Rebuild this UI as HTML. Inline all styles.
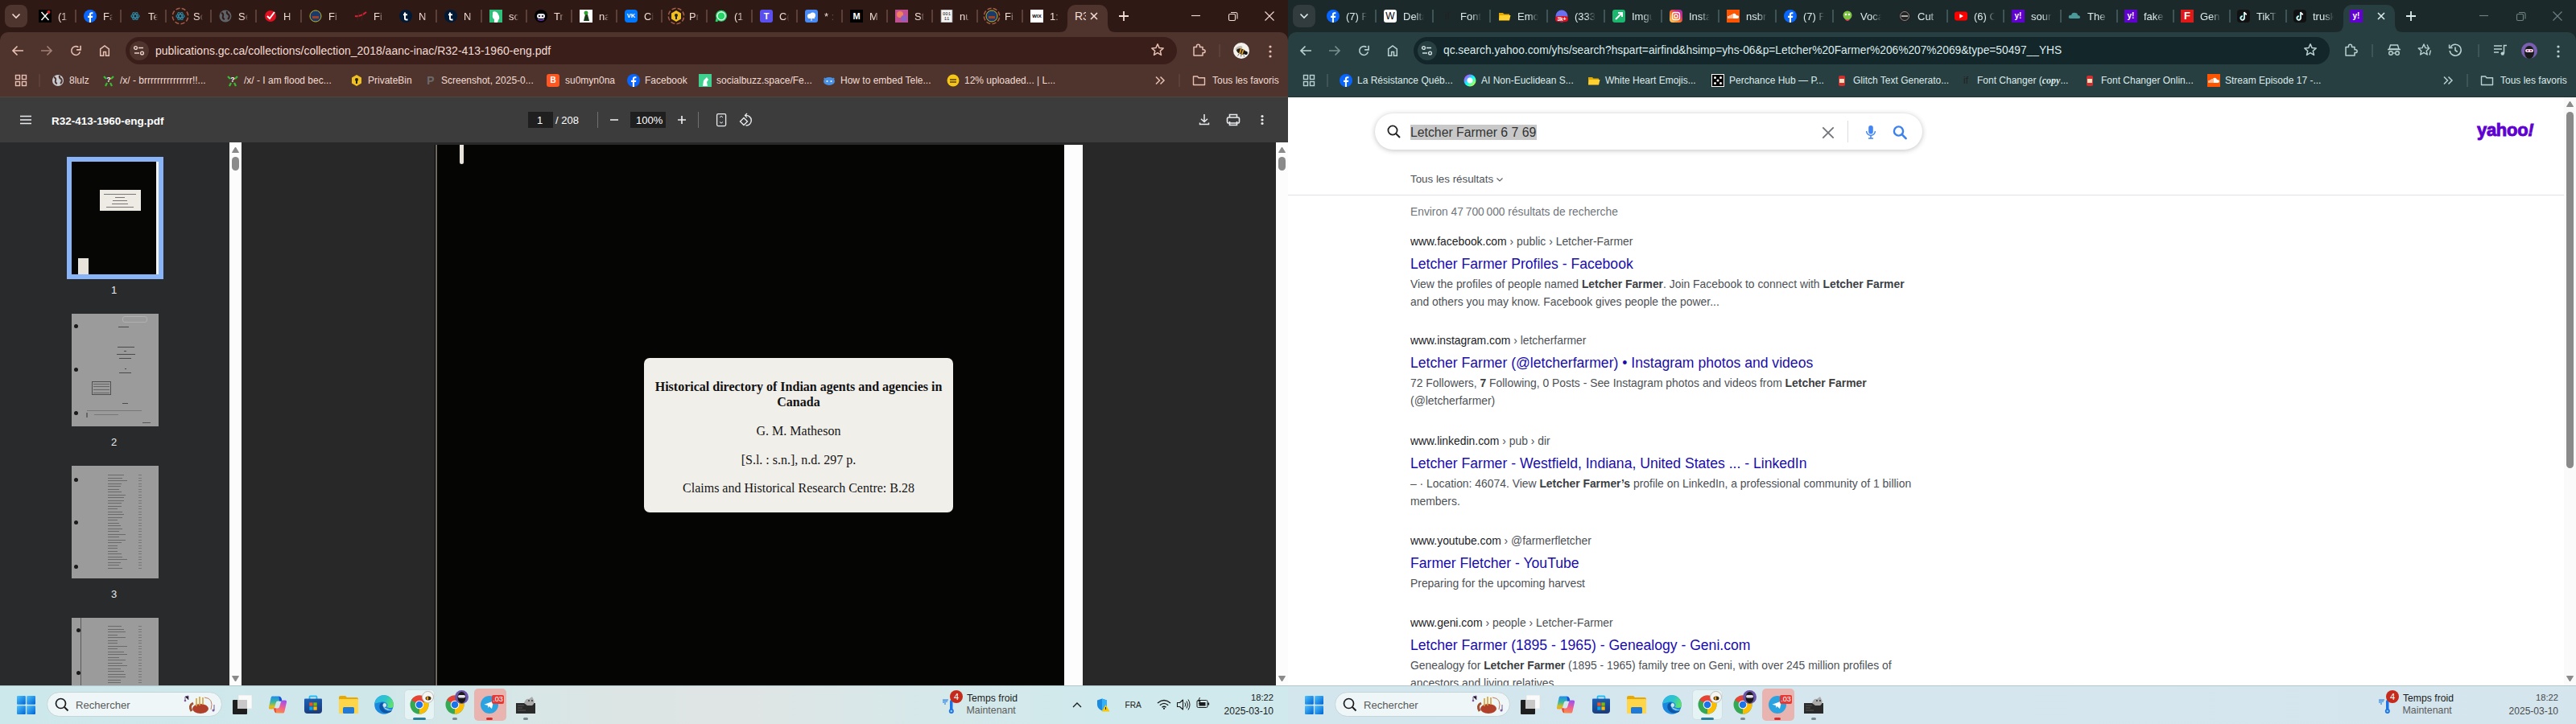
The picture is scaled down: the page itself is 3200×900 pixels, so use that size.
<!DOCTYPE html>
<html><head><meta charset="utf-8"><style>
html,body{margin:0;padding:0;width:3200px;height:900px;overflow:hidden;background:#000;font-family:"Liberation Sans",sans-serif}
body>div,body>svg{position:absolute}
div{box-sizing:border-box}
.t{position:absolute;white-space:nowrap}
.tt{overflow:hidden;-webkit-mask-image:linear-gradient(to right,#000 55%,transparent)}
.ic{position:absolute;text-align:center;line-height:16px;font-family:"Liberation Sans",sans-serif}
</style></head><body>
<div style="left:0px;top:0px;width:1600px;height:52px;background:#2f1915;"></div>
<div style="left:6px;top:6px;width:28px;height:28px;background:#4e352e;border-radius:8px"></div>
<svg style="position:absolute;left:14px;top:16px;" width="12" height="8" viewBox="0 0 12 8"><path d="M1.5 1.5 L6 6 L10.5 1.5" stroke="#f3dcd4" stroke-width="1.6" fill="none"/></svg>
<svg style="position:absolute;left:48px;top:12px" width="16" height="16" viewBox="0 0 16 16"><rect width="16" height="16" fill="#000"/><path d="M3.5 3 L12.5 13 M12.5 3 L3.5 13" stroke="#fff" stroke-width="1.5"/><circle cx="12.5" cy="3" r="2" fill="#e02020"/></svg>
<div class="t tt" style="left:72px;top:12.5px;width:11.5px;font-size:13px;line-height:16px;color:#f3dcd4">(1</div>
<div style="left:93px;top:12px;width:1.6px;height:16px;background:#5c3f37;"></div>
<svg style="position:absolute;left:104px;top:12px" width="16" height="16" viewBox="0 0 16 16"><circle cx="8" cy="8" r="8" fill="#0866ff"/><path d="M9 16 V10 H11 L11.3 7.7 H9 V6.4 C9 5.8 9.3 5.3 10.1 5.3 H11.4 V3.3 C10.9 3.2 10.3 3.2 9.7 3.2 C8 3.2 6.9 4.2 6.9 6 V7.7 H5 V10 H6.9 V16 Z" fill="#fff"/></svg>
<div class="t tt" style="left:128px;top:12.5px;width:11.5px;font-size:13px;line-height:16px;color:#f3dcd4">Fa</div>
<div style="left:149px;top:12px;width:1.6px;height:16px;background:#5c3f37;"></div>
<svg style="position:absolute;left:160px;top:12px" width="16" height="16" viewBox="0 0 16 16"><g stroke="#2a8aa8" stroke-width="1.2" fill="none"><ellipse cx="8" cy="8" rx="5" ry="2"/><ellipse cx="8" cy="8" rx="5" ry="2" transform="rotate(60 8 8)"/><ellipse cx="8" cy="8" rx="5" ry="2" transform="rotate(120 8 8)"/></g></svg>
<div class="t tt" style="left:184px;top:12.5px;width:11.5px;font-size:13px;line-height:16px;color:#f3dcd4">Te</div>
<div style="left:205px;top:12px;width:1.6px;height:16px;background:#5c3f37;"></div>
<svg style="position:absolute;left:216px;top:12px" width="16" height="16" viewBox="0 0 16 16"><g stroke="#2a8aa8" stroke-width="1.2" fill="none"><ellipse cx="8" cy="8" rx="5" ry="2"/><ellipse cx="8" cy="8" rx="5" ry="2" transform="rotate(60 8 8)"/><ellipse cx="8" cy="8" rx="5" ry="2" transform="rotate(120 8 8)"/></g></svg><svg style="position:absolute;left:212px;top:8px" width="24" height="24"><circle cx="12" cy="12" r="9.7" stroke="#a55e48" stroke-width="1.5" fill="none" stroke-dasharray="5.2 2.4" transform="rotate(-80 12 12)"/></svg>
<div class="t tt" style="left:240px;top:12.5px;width:11.5px;font-size:13px;line-height:16px;color:#f3dcd4">Sc</div>
<div style="left:261px;top:12px;width:1.6px;height:16px;background:#5c3f37;"></div>
<svg style="position:absolute;left:272px;top:12px" width="16" height="16" viewBox="0 0 16 16"><circle cx="8" cy="8" r="7.5" fill="#5f6368"/><path d="M3 4 Q6 5 5 8 Q4 11 7 12 M10 2 Q9 5 12 6 Q14 9 11 12" stroke="#2f1915" stroke-width="2" fill="none"/></svg>
<div class="t tt" style="left:296px;top:12.5px;width:11.5px;font-size:13px;line-height:16px;color:#f3dcd4">Se</div>
<div style="left:317px;top:12px;width:1.6px;height:16px;background:#5c3f37;"></div>
<svg style="position:absolute;left:328px;top:12px" width="16" height="16" viewBox="0 0 16 16"><circle cx="8" cy="8" r="7" fill="#e01020"/><path d="M4 8 L7 11 L13 3" stroke="#fff" stroke-width="2" fill="none"/></svg>
<div class="t tt" style="left:352px;top:12.5px;width:11.5px;font-size:13px;line-height:16px;color:#f3dcd4">H</div>
<div style="left:373px;top:12px;width:1.6px;height:16px;background:#5c3f37;"></div>
<svg style="position:absolute;left:384px;top:12px" width="16" height="16" viewBox="0 0 16 16"><circle cx="8" cy="8" r="7.5" fill="#1a3a6a"/><circle cx="8" cy="8" r="7" stroke="#c0b020" stroke-width="1" fill="none"/><rect x="4" y="8" width="8" height="3" fill="#a04020"/></svg>
<div class="t tt" style="left:408px;top:12.5px;width:11.5px;font-size:13px;line-height:16px;color:#f3dcd4">Fi</div>
<svg style="position:absolute;left:440px;top:12px" width="16" height="16" viewBox="0 0 16 16"><path d="M1 8 Q8 9 15 3" stroke="#e02030" stroke-width="2" fill="none"/><path d="M6 3 L4 14 M11 3 L9 14" stroke="#402020" stroke-width="1" fill="none"/></svg>
<div class="t tt" style="left:464px;top:12.5px;width:11.5px;font-size:13px;line-height:16px;color:#f3dcd4">Fi</div>
<svg style="position:absolute;left:496px;top:12px" width="16" height="16" viewBox="0 0 16 16"><circle cx="8" cy="8" r="8" fill="#001935"/><path d="M7 3.5 V11 Q7 12.5 9 12.5 H10.5 M5 6.3 H10" stroke="#fff" stroke-width="2" fill="none"/></svg>
<div class="t tt" style="left:520px;top:12.5px;width:11.5px;font-size:13px;line-height:16px;color:#f3dcd4">N</div>
<div style="left:541px;top:12px;width:1.6px;height:16px;background:#5c3f37;"></div>
<svg style="position:absolute;left:552px;top:12px" width="16" height="16" viewBox="0 0 16 16"><circle cx="8" cy="8" r="8" fill="#001935"/><path d="M7 3.5 V11 Q7 12.5 9 12.5 H10.5 M5 6.3 H10" stroke="#fff" stroke-width="2" fill="none"/></svg>
<div class="t tt" style="left:576px;top:12.5px;width:11.5px;font-size:13px;line-height:16px;color:#f3dcd4">N</div>
<div style="left:597px;top:12px;width:1.6px;height:16px;background:#5c3f37;"></div>
<svg style="position:absolute;left:608px;top:12px" width="16" height="16" viewBox="0 0 16 16"><rect width="16" height="16" fill="#2fbf7a"/><path d="M4 3 Q7 1 10 4 L12 8 Q13 11 11 13 L10 16 H6 L6 12 Q3 10 4 6 Z" fill="#fff"/></svg>
<div class="t tt" style="left:632px;top:12.5px;width:11.5px;font-size:13px;line-height:16px;color:#f3dcd4">sc</div>
<div style="left:653px;top:12px;width:1.6px;height:16px;background:#5c3f37;"></div>
<svg style="position:absolute;left:664px;top:12px" width="16" height="16" viewBox="0 0 16 16"><circle cx="8" cy="8" r="8" fill="#000"/><rect x="3" y="5" width="10" height="6" rx="3" fill="#e8e8f0"/><circle cx="6" cy="8" r="1" fill="#000"/><circle cx="10" cy="8" r="1" fill="#000"/><path d="M4 12 Q8 14 12 12" stroke="#8040c0" stroke-width="1.5" fill="none"/></svg>
<div class="t tt" style="left:688px;top:12.5px;width:11.5px;font-size:13px;line-height:16px;color:#f3dcd4">Tr</div>
<div style="left:709px;top:12px;width:1.6px;height:16px;background:#5c3f37;"></div>
<svg style="position:absolute;left:720px;top:12px" width="16" height="16" viewBox="0 0 16 16"><rect width="16" height="16" fill="#fff"/><path d="M5 14 L7 6 L10 6 L12 14 Z" fill="#1a3a1a"/><circle cx="8" cy="4" r="2.5" fill="#30a030"/></svg>
<div class="t tt" style="left:744px;top:12.5px;width:11.5px;font-size:13px;line-height:16px;color:#f3dcd4">na</div>
<div style="left:765px;top:12px;width:1.6px;height:16px;background:#5c3f37;"></div>
<div class="ic" style="left:776px;top:12px;width:16px;height:16px;background:#0077ff;border-radius:4px;color:#fff;font-size:7.5px;font-weight:700">VK</div>
<div class="t tt" style="left:800px;top:12.5px;width:11.5px;font-size:13px;line-height:16px;color:#f3dcd4">Ci</div>
<div style="left:821px;top:12px;width:1.6px;height:16px;background:#5c3f37;"></div>
<svg style="position:absolute;left:832px;top:12px" width="16" height="16" viewBox="0 0 16 16"><path d="M8 1 L14 4.5 V11.5 L8 15 L2 11.5 V4.5 Z" fill="#f0c020"/><circle cx="8" cy="7" r="2" fill="#222"/><rect x="7" y="8" width="2" height="4" fill="#222"/></svg><svg style="position:absolute;left:828px;top:8px" width="24" height="24"><circle cx="12" cy="12" r="9.7" stroke="#a55e48" stroke-width="1.5" fill="none" stroke-dasharray="5.2 2.4" transform="rotate(-80 12 12)"/></svg>
<div class="t tt" style="left:856px;top:12.5px;width:11.5px;font-size:13px;line-height:16px;color:#f3dcd4">Pr</div>
<div style="left:877px;top:12px;width:1.6px;height:16px;background:#5c3f37;"></div>
<svg style="position:absolute;left:888px;top:12px" width="16" height="16" viewBox="0 0 16 16"><circle cx="8" cy="7.8" r="7" fill="#25d366"/><path d="M2 15 L3 11" stroke="#25d366" stroke-width="3"/><circle cx="8" cy="7.8" r="5" stroke="#fff" stroke-width="1.2" fill="none"/></svg>
<div class="t tt" style="left:912px;top:12.5px;width:11.5px;font-size:13px;line-height:16px;color:#f3dcd4">(1</div>
<div style="left:933px;top:12px;width:1.6px;height:16px;background:#5c3f37;"></div>
<div class="ic" style="left:944px;top:12px;width:16px;height:16px;background:#5b4ff0;border-radius:3px;color:#fff;font-size:11px;font-weight:900">T</div>
<div class="t tt" style="left:968px;top:12.5px;width:11.5px;font-size:13px;line-height:16px;color:#f3dcd4">C(</div>
<div style="left:989px;top:12px;width:1.6px;height:16px;background:#5c3f37;"></div>
<svg style="position:absolute;left:1000px;top:12px" width="16" height="16" viewBox="0 0 16 16"><rect width="16" height="16" rx="3" fill="#4a8af4"/><circle cx="6" cy="8" r="3" fill="#fff"/><circle cx="9.5" cy="7" r="3.5" fill="#fff"/><rect x="4" y="8" width="8" height="3" fill="#fff"/><rect x="7.5" y="10" width="1" height="4" fill="#fff"/></svg>
<div class="t tt" style="left:1024px;top:12.5px;width:11.5px;font-size:13px;line-height:16px;color:#f3dcd4">* :</div>
<div style="left:1045px;top:12px;width:1.6px;height:16px;background:#5c3f37;"></div>
<div class="ic" style="left:1056px;top:12px;width:16px;height:16px;background:#000;border-radius:0px;color:#fff;font-size:11px;font-weight:900">M</div>
<div class="t tt" style="left:1080px;top:12.5px;width:11.5px;font-size:13px;line-height:16px;color:#f3dcd4">M</div>
<div style="left:1101px;top:12px;width:1.6px;height:16px;background:#5c3f37;"></div>
<svg style="position:absolute;left:1112px;top:12px" width="16" height="16" viewBox="0 0 16 16"><rect width="16" height="16" fill="#c05090"/><circle cx="6" cy="6" r="4" fill="#f08060"/><circle cx="11" cy="11" r="4" fill="#9060c0"/></svg>
<div class="t tt" style="left:1136px;top:12.5px;width:11.5px;font-size:13px;line-height:16px;color:#f3dcd4">St</div>
<div style="left:1157px;top:12px;width:1.6px;height:16px;background:#5c3f37;"></div>
<svg style="position:absolute;left:1168px;top:12px" width="16" height="16" viewBox="0 0 16 16"><rect x="1" y="0" width="14" height="16" fill="#f4f4f4" stroke="#888" stroke-width="0.8"/><text x="8" y="7" font-size="5.5" text-anchor="middle" fill="#222" font-family="Liberation Mono">001</text><text x="8" y="13" font-size="5.5" text-anchor="middle" fill="#222" font-family="Liberation Mono">11</text></svg>
<div class="t tt" style="left:1192px;top:12.5px;width:11.5px;font-size:13px;line-height:16px;color:#f3dcd4">nu</div>
<div style="left:1213px;top:12px;width:1.6px;height:16px;background:#5c3f37;"></div>
<svg style="position:absolute;left:1224px;top:12px" width="16" height="16" viewBox="0 0 16 16"><circle cx="8" cy="8" r="7.5" fill="#1a3a6a"/><circle cx="8" cy="8" r="7" stroke="#c0b020" stroke-width="1" fill="none"/><rect x="4" y="8" width="8" height="3" fill="#a04020"/></svg><svg style="position:absolute;left:1220px;top:8px" width="24" height="24"><circle cx="12" cy="12" r="9.7" stroke="#a55e48" stroke-width="1.5" fill="none" stroke-dasharray="5.2 2.4" transform="rotate(-80 12 12)"/></svg>
<div class="t tt" style="left:1248px;top:12.5px;width:11.5px;font-size:13px;line-height:16px;color:#f3dcd4">Fi</div>
<div style="left:1269px;top:12px;width:1.6px;height:16px;background:#5c3f37;"></div>
<div class="ic" style="left:1280px;top:12px;width:16px;height:16px;background:#fff;border-radius:0px;color:#000;font-size:6px;font-weight:700">WIX</div>
<div class="t tt" style="left:1304px;top:12.5px;width:11.5px;font-size:13px;line-height:16px;color:#f3dcd4">1:</div>
<div style="left:1326px;top:6px;width:50px;height:40px;background:#4e342d;border-radius:10px 10px 0 0"></div>
<svg style="position:absolute;left:1316px;top:26px;" width="10" height="14" viewBox="0 0 10 14"><path d="M0 14 Q10 14 10 4 L10 14 Z" fill="#4e342d"/></svg>
<svg style="position:absolute;left:1376px;top:26px;" width="10" height="14" viewBox="0 0 10 14"><path d="M10 14 Q0 14 0 4 L0 14 Z" fill="#4e342d"/></svg>
<div class="t" style="left:1335px;top:12px;width:14px;overflow:hidden;font-size:14px;line-height:16px;color:#f3dcd4">R32</div>
<svg style="position:absolute;left:1353px;top:14px;" width="12" height="12" viewBox="0 0 12 12"><path d="M2 2 L10 10 M10 2 L2 10" stroke="#f3dcd4" stroke-width="1.6"/></svg>
<svg style="position:absolute;left:1389px;top:13px;" width="14" height="14" viewBox="0 0 14 14"><path d="M7 1 V13 M1 7 H13" stroke="#f3dcd4" stroke-width="1.8"/></svg>
<svg style="position:absolute;left:1479px;top:13px;" width="14" height="14" viewBox="0 0 14 14"><path d="M1 6.5 H12" stroke="#f3dcd4" stroke-width="1.1"/></svg>
<svg style="position:absolute;left:1525px;top:14px;" width="14" height="14" viewBox="0 0 14 14"><rect x="1.5" y="3.5" width="8" height="8" rx="1.5" stroke="#f3dcd4" stroke-width="1.1" fill="none"/><path d="M4 1.5 H10 Q12 1.5 12 3.5 V9.5" stroke="#f3dcd4" stroke-width="1.1" fill="none"/></svg>
<svg style="position:absolute;left:1570px;top:13px;" width="14" height="14" viewBox="0 0 14 14"><path d="M1.5 1.5 L12.5 12.5 M12.5 1.5 L1.5 12.5" stroke="#f3dcd4" stroke-width="1.1"/></svg>
<div style="left:0px;top:40px;width:1600px;height:80px;background:#4e342d;border-radius:10px 10px 0 0"></div>
<svg style="position:absolute;left:13px;top:55px;" width="18" height="16" viewBox="0 0 18 16"><path d="M16 8 H3 M8.5 2.5 L3 8 L8.5 13.5" stroke="#e8bfb3" stroke-width="1.7" fill="none"/></svg>
<svg style="position:absolute;left:49px;top:55px;" width="18" height="16" viewBox="0 0 18 16"><path d="M2 8 H15 M9.5 2.5 L15 8 L9.5 13.5" stroke="#e8bfb3" stroke-width="1.7" fill="none" opacity="0.55"/></svg>
<svg style="position:absolute;left:86px;top:55px;" width="16" height="16" viewBox="0 0 16 16"><path d="M13.4 9.4 A5.4 5.4 0 1 1 11.4 3.7" stroke="#e8bfb3" stroke-width="1.6" fill="none"/><path d="M14.1 1.8 V6.9 H9.1" stroke="#e8bfb3" stroke-width="1.6" fill="none"/></svg>
<svg style="position:absolute;left:122px;top:55px;" width="16" height="16" viewBox="0 0 16 16"><path d="M2.7 14.2 V5.9 L8 1.9 L13.3 5.9 V14.2 H9.5 V9.4 H6.6 V14.2 Z" stroke="#e8bfb3" stroke-width="1.5" fill="none" stroke-linejoin="miter"/></svg>
<div style="left:156px;top:46px;width:1306px;height:34px;background:#391e19;border-radius:17px"></div>
<div style="left:161px;top:51px;width:24px;height:24px;background:#4e342d;border-radius:12px"></div>
<svg style="position:absolute;left:165px;top:56px;" width="16" height="14" viewBox="0 0 16 14"><circle cx="3.5" cy="3.5" r="1.9" stroke="#f3dcd4" stroke-width="1.3" fill="none"/><path d="M7 3.5 H13" stroke="#f3dcd4" stroke-width="1.4"/><circle cx="11.5" cy="10" r="1.9" stroke="#f3dcd4" stroke-width="1.3" fill="none"/><path d="M2 10 H8" stroke="#f3dcd4" stroke-width="1.4"/></svg>
<div class="t" style="left:193px;top:55px;font-size:14px;line-height:16px;color:#f3dcd4">publications.gc.ca/collections/collection_2018/aanc-inac/R32-413-1960-eng.pdf</div>
<svg style="position:absolute;left:1429px;top:53px;" width="18" height="18" viewBox="0 0 18 18"><path d="M9 1.8 L11.1 6.6 L16.2 7 L12.3 10.4 L13.5 15.4 L9 12.7 L4.5 15.4 L5.7 10.4 L1.8 7 L6.9 6.6 Z" stroke="#e8bfb3" stroke-width="1.5" fill="none" stroke-linejoin="round"/></svg>
<svg style="position:absolute;left:1480px;top:53px;" width="18" height="18" viewBox="0 0 18 18"><path d="M3 5.5 H6.5 V4.3 A2 2 0 0 1 10.5 4.3 V5.5 H14 V8.8 H15.2 A1.9 1.9 0 0 1 15.2 12.6 H14 V16 H3 Z" stroke="#e8bfb3" stroke-width="1.5" fill="none" stroke-linejoin="round"/></svg>
<div style="left:1514px;top:55px;width:2px;height:16px;background:#5c3f37;"></div>
<div style="left:1532px;top:53px;width:20px;height:20px;border-radius:10px;background:#f4f1ec"></div>
<svg style="position:absolute;left:1532px;top:53px;" width="20" height="20" viewBox="0 0 20 20"><ellipse cx="7" cy="7" rx="4.5" ry="2.4" transform="rotate(-25 7 7)" fill="#b8b2a8" opacity="0.85"/><g transform="rotate(18 10 11)"><ellipse cx="10" cy="11" rx="6" ry="3.3" fill="#231c12"/><rect x="8" y="7.8" width="1.6" height="6.4" fill="#e2a628"/><rect x="11" y="7.8" width="1.6" height="6.4" fill="#e2a628"/><circle cx="16" cy="11" r="2.2" fill="#141414"/></g><path d="M7 14 L5.5 16.5 M10 15 L9.5 17.5 M13 15.5 L13.5 17.5" stroke="#333" stroke-width="0.7"/></svg>
<svg style="position:absolute;left:1575px;top:55px;" width="6" height="18" viewBox="0 0 6 18"><circle cx="3" cy="3" r="1.6" fill="#e8bfb3"/><circle cx="3" cy="9" r="1.6" fill="#e8bfb3"/><circle cx="3" cy="15" r="1.6" fill="#e8bfb3"/></svg>
<svg style="position:absolute;left:18px;top:92px;" width="16" height="16" viewBox="0 0 16 16"><rect x="1.5" y="1.5" width="5" height="5" stroke="#e8bfb3" stroke-width="1.4" fill="none"/><rect x="9.5" y="1.5" width="5" height="5" stroke="#e8bfb3" stroke-width="1.4" fill="none"/><rect x="1.5" y="9.5" width="5" height="5" stroke="#e8bfb3" stroke-width="1.4" fill="none"/><rect x="9.5" y="9.5" width="5" height="5" stroke="#e8bfb3" stroke-width="1.4" fill="none"/></svg>
<div style="left:48px;top:92px;width:2px;height:16px;background:#5c3f37;"></div>
<svg style="position:absolute;left:64px;top:92px" width="16" height="16" viewBox="0 0 16 16"><circle cx="8" cy="8" r="7" fill="#c8ccd0"/><path d="M3 4 Q6 5 5 8 Q4 11 7 12 M10 2 Q9 5 12 6 Q14 9 11 12" stroke="#4e342d" stroke-width="2" fill="none"/></svg>
<div class="t" style="left:86px;top:93px;font-size:12px;line-height:15px;color:#f3dcd4;white-space:nowrap">8lulz</div>
<svg style="position:absolute;left:127px;top:92px" width="16" height="16" viewBox="0 0 16 16"><path d="M2 3 L5 6 M14 3 L11 6" stroke="#30c030" stroke-width="2.2"/><text x="8" y="10" font-size="9" text-anchor="middle" fill="#fff" font-weight="700" font-family="Liberation Sans">?</text><path d="M4 15 L6 11 M12 15 L10 11" stroke="#30c030" stroke-width="2.2"/></svg>
<div class="t" style="left:149px;top:93px;font-size:12px;line-height:15px;color:#f3dcd4;white-space:nowrap">/x/ - brrrrrrrrrrrrrrr!!...</div>
<svg style="position:absolute;left:281px;top:92px" width="16" height="16" viewBox="0 0 16 16"><path d="M2 3 L5 6 M14 3 L11 6" stroke="#30c030" stroke-width="2.2"/><text x="8" y="10" font-size="9" text-anchor="middle" fill="#fff" font-weight="700" font-family="Liberation Sans">?</text><path d="M4 15 L6 11 M12 15 L10 11" stroke="#30c030" stroke-width="2.2"/></svg>
<div class="t" style="left:303px;top:93px;font-size:12px;line-height:15px;color:#f3dcd4;white-space:nowrap">/x/ - I am flood bec...</div>
<svg style="position:absolute;left:435px;top:92px" width="16" height="16" viewBox="0 0 16 16"><path d="M8 1 L14 4.5 V11.5 L8 15 L2 11.5 V4.5 Z" fill="#f0c020"/><circle cx="8" cy="7" r="2" fill="#222"/><rect x="7" y="8" width="2" height="4" fill="#222"/></svg>
<div class="t" style="left:457px;top:93px;font-size:12px;line-height:15px;color:#f3dcd4;white-space:nowrap">PrivateBin</div>
<div class="ic" style="left:527px;top:92px;width:16px;height:16px;background:transparent;border-radius:0px;color:#6a6a6a;font-size:14px;font-weight:900">P</div>
<div class="t" style="left:548px;top:93px;font-size:12px;line-height:15px;color:#f3dcd4;white-space:nowrap">Screenshot, 2025-0...</div>
<div class="ic" style="left:679px;top:92px;width:16px;height:16px;background:#ff5722;border-radius:3px;color:#fff;font-size:10px;font-weight:900">B</div>
<div class="t" style="left:702px;top:93px;font-size:12px;line-height:15px;color:#f3dcd4;white-space:nowrap">su0myn0na</div>
<svg style="position:absolute;left:779px;top:92px" width="16" height="16" viewBox="0 0 16 16"><circle cx="8" cy="8" r="8" fill="#0866ff"/><path d="M9 16 V10 H11 L11.3 7.7 H9 V6.4 C9 5.8 9.3 5.3 10.1 5.3 H11.4 V3.3 C10.9 3.2 10.3 3.2 9.7 3.2 C8 3.2 6.9 4.2 6.9 6 V7.7 H5 V10 H6.9 V16 Z" fill="#fff"/></svg>
<div class="t" style="left:801px;top:93px;font-size:12px;line-height:15px;color:#f3dcd4;white-space:nowrap">Facebook</div>
<svg style="position:absolute;left:868px;top:92px" width="16" height="16" viewBox="0 0 16 16"><rect width="16" height="16" fill="#3fcf8e"/><path d="M5 15 L6 8 L10 4 L12 7 L10 10 L11 15 Z" fill="#fff"/></svg>
<div class="t" style="left:890px;top:93px;font-size:12px;line-height:15px;color:#f3dcd4;white-space:nowrap">socialbuzz.space/Fe...</div>
<svg style="position:absolute;left:1022px;top:92px" width="16" height="16" viewBox="0 0 16 16"><ellipse cx="8" cy="9" rx="7" ry="5" fill="#4a90e2"/><path d="M2 5 L4 8 M14 5 L12 8" stroke="#4a90e2" stroke-width="2"/><circle cx="5.5" cy="9" r="1" fill="#fff"/><circle cx="10.5" cy="9" r="1" fill="#fff"/></svg>
<div class="t" style="left:1044px;top:93px;font-size:12px;line-height:15px;color:#f3dcd4;white-space:nowrap">How to embed Tele...</div>
<svg style="position:absolute;left:1176px;top:92px" width="16" height="16" viewBox="0 0 16 16"><circle cx="8" cy="8" r="7.5" fill="#f5c518"/><path d="M4 7 H12 M4 10 H12" stroke="#5a4000" stroke-width="1.3"/></svg>
<div class="t" style="left:1198px;top:93px;font-size:12px;line-height:15px;color:#f3dcd4;white-space:nowrap">12% uploaded... | L...</div>
<svg style="position:absolute;left:1434px;top:94px;" width="14" height="12" viewBox="0 0 14 12"><path d="M2 1.5 L6.5 6 L2 10.5 M7.5 1.5 L12 6 L7.5 10.5" stroke="#e8bfb3" stroke-width="1.5" fill="none"/></svg>
<div style="left:1464px;top:92px;width:2px;height:16px;background:#5c3f37;"></div>
<svg style="position:absolute;left:1481px;top:92px;" width="18" height="16" viewBox="0 0 18 16"><path d="M1.5 3 H6.5 L8 4.8 H15.5 V13.5 H1.5 Z" stroke="#e8bfb3" stroke-width="1.4" fill="none" stroke-linejoin="round"/></svg>
<div class="t" style="left:1506px;top:93px;font-size:12px;line-height:15px;color:#f3dcd4;white-space:nowrap">Tous les favoris</div>
<div style="left:1600px;top:0px;width:1600px;height:52px;background:#1c292b;"></div>
<div style="left:1606px;top:6px;width:28px;height:28px;background:#323c3e;border-radius:8px"></div>
<svg style="position:absolute;left:1614px;top:16px;" width="12" height="8" viewBox="0 0 12 8"><path d="M1.5 1.5 L6 6 L10.5 1.5" stroke="#dcebeb" stroke-width="1.6" fill="none"/></svg>
<svg style="position:absolute;left:1648px;top:12px" width="16" height="16" viewBox="0 0 16 16"><circle cx="8" cy="8" r="8" fill="#0866ff"/><path d="M9 16 V10 H11 L11.3 7.7 H9 V6.4 C9 5.8 9.3 5.3 10.1 5.3 H11.4 V3.3 C10.9 3.2 10.3 3.2 9.7 3.2 C8 3.2 6.9 4.2 6.9 6 V7.7 H5 V10 H6.9 V16 Z" fill="#fff"/></svg>
<div class="t tt" style="left:1672px;top:12.5px;width:26px;font-size:13px;line-height:16px;color:#dcebeb">(7) Fa</div>
<div style="left:1708px;top:12px;width:1.6px;height:16px;background:#3f5456;"></div>
<div class="ic" style="left:1719px;top:12px;width:16px;height:16px;background:#fff;border-radius:3px;color:#000;font-size:12px;font-weight:400">W</div>
<div class="t tt" style="left:1743px;top:12.5px;width:26px;font-size:13px;line-height:16px;color:#dcebeb">Delta</div>
<div style="left:1779px;top:12px;width:1.6px;height:16px;background:#3f5456;"></div>
<div class="ic" style="left:1790px;top:12px;width:16px;height:16px;background:transparent;border-radius:0px;color:#222;font-size:12px;font-weight:400">if</div>
<div class="t tt" style="left:1814px;top:12.5px;width:26px;font-size:13px;line-height:16px;color:#dcebeb">Font</div>
<div style="left:1850px;top:12px;width:1.6px;height:16px;background:#3f5456;"></div>
<svg style="position:absolute;left:1861px;top:12px" width="16" height="16" viewBox="0 0 16 16"><path d="M1 4 H6 L7.5 5.5 H14 V13 H1 Z" fill="#e0a800"/><path d="M2 7 H15.5 L14 13.5 H1 Z" fill="#ffd030"/></svg>
<div class="t tt" style="left:1885px;top:12.5px;width:26px;font-size:13px;line-height:16px;color:#dcebeb">Emoj</div>
<div style="left:1921px;top:12px;width:1.6px;height:16px;background:#3f5456;"></div>
<svg style="position:absolute;left:1932px;top:12px" width="16" height="16" viewBox="0 0 16 16"><circle cx="8" cy="8" r="7.5" fill="#6a70f0"/><rect x="0" y="8" width="16" height="7" rx="3.5" fill="#e01020"/><text x="8" y="14" font-size="6.5" text-anchor="middle" fill="#fff" font-weight="700" font-family="Liberation Sans">3k+</text></svg>
<div class="t tt" style="left:1956px;top:12.5px;width:26px;font-size:13px;line-height:16px;color:#dcebeb">(333</div>
<div style="left:1992px;top:12px;width:1.6px;height:16px;background:#3f5456;"></div>
<svg style="position:absolute;left:2003px;top:12px" width="16" height="16" viewBox="0 0 16 16"><rect width="16" height="16" rx="3" fill="#1bb76e"/><path d="M4 12 L11 5 M7 4 H12 V9" stroke="#fff" stroke-width="2" fill="none"/></svg>
<div class="t tt" style="left:2027px;top:12.5px;width:26px;font-size:13px;line-height:16px;color:#dcebeb">Imgu</div>
<div style="left:2063px;top:12px;width:1.6px;height:16px;background:#3f5456;"></div>
<svg style="position:absolute;left:2074px;top:12px" width="16" height="16" viewBox="0 0 16 16"><defs><linearGradient id="ig" x1="0" y1="1" x2="1" y2="0"><stop offset="0" stop-color="#feda75"/><stop offset="0.4" stop-color="#fa7e1e"/><stop offset="0.7" stop-color="#d62976"/><stop offset="1" stop-color="#962fbf"/></linearGradient></defs><rect width="16" height="16" rx="4" fill="url(#ig)"/><rect x="3.5" y="3.5" width="9" height="9" rx="2.5" stroke="#fff" stroke-width="1.3" fill="none"/><circle cx="8" cy="8" r="2.2" stroke="#fff" stroke-width="1.3" fill="none"/></svg>
<div class="t tt" style="left:2098px;top:12.5px;width:26px;font-size:13px;line-height:16px;color:#dcebeb">Insta</div>
<div style="left:2134px;top:12px;width:1.6px;height:16px;background:#3f5456;"></div>
<svg style="position:absolute;left:2145px;top:12px" width="16" height="16" viewBox="0 0 16 16"><rect width="16" height="16" fill="#ff5500"/><path d="M2 11 V8 M4 11 V7 M6 11 V6 M8 11 V5" stroke="#fff" stroke-width="1.2"/><path d="M8 5 Q11 4 12 7 Q15 7 15 9 Q15 11 13 11 H8 Z" fill="#fff"/></svg>
<div class="t tt" style="left:2169px;top:12.5px;width:26px;font-size:13px;line-height:16px;color:#dcebeb">nsbr</div>
<div style="left:2205px;top:12px;width:1.6px;height:16px;background:#3f5456;"></div>
<svg style="position:absolute;left:2216px;top:12px" width="16" height="16" viewBox="0 0 16 16"><circle cx="8" cy="8" r="8" fill="#0866ff"/><path d="M9 16 V10 H11 L11.3 7.7 H9 V6.4 C9 5.8 9.3 5.3 10.1 5.3 H11.4 V3.3 C10.9 3.2 10.3 3.2 9.7 3.2 C8 3.2 6.9 4.2 6.9 6 V7.7 H5 V10 H6.9 V16 Z" fill="#fff"/></svg>
<div class="t tt" style="left:2240px;top:12.5px;width:26px;font-size:13px;line-height:16px;color:#dcebeb">(7) F</div>
<div style="left:2276px;top:12px;width:1.6px;height:16px;background:#3f5456;"></div>
<svg style="position:absolute;left:2287px;top:12px" width="16" height="16" viewBox="0 0 16 16"><circle cx="8" cy="7" r="5.5" fill="#7cc540"/><circle cx="6" cy="6" r="1.3" fill="#fff"/><circle cx="10" cy="6" r="1.3" fill="#fff"/><path d="M5 12 Q8 16 11 12" fill="#e05060"/></svg>
<div class="t tt" style="left:2311px;top:12.5px;width:26px;font-size:13px;line-height:16px;color:#dcebeb">Voca</div>
<svg style="position:absolute;left:2358px;top:12px" width="16" height="16" viewBox="0 0 16 16"><circle cx="8" cy="8" r="7.5" fill="#222"/><circle cx="8" cy="8" r="5.5" stroke="#888" stroke-width="1" fill="none"/><rect x="4" y="7" width="8" height="2" fill="#aaa"/></svg>
<div class="t tt" style="left:2382px;top:12.5px;width:26px;font-size:13px;line-height:16px;color:#dcebeb">Cut</div>
<div style="left:2418px;top:12px;width:1.6px;height:16px;background:#3f5456;"></div>
<svg style="position:absolute;left:2428px;top:12px" width="16" height="16" viewBox="0 0 16 16"><rect x="0" y="2.5" width="16" height="11" rx="3" fill="#ff0000"/><path d="M6.3 5.3 L11 8 L6.3 10.7 Z" fill="#fff"/></svg>
<div class="t tt" style="left:2452px;top:12.5px;width:26px;font-size:13px;line-height:16px;color:#dcebeb">(6) C</div>
<div style="left:2488px;top:12px;width:1.6px;height:16px;background:#3f5456;"></div>
<div class="ic" style="left:2499px;top:12px;width:16px;height:16px;background:#6001d2;border-radius:0px;color:#fff;font-size:10px;font-weight:900">y!</div>
<div class="t tt" style="left:2523px;top:12.5px;width:26px;font-size:13px;line-height:16px;color:#dcebeb">sour</div>
<div style="left:2559px;top:12px;width:1.6px;height:16px;background:#3f5456;"></div>
<svg style="position:absolute;left:2569px;top:12px" width="16" height="16" viewBox="0 0 16 16"><path d="M3 11 Q0 11 1 8 Q2 6 4 7 Q5 3 9 4 Q12 4 12 7 Q15 7 15 9.5 Q15 11 13 11 Z" fill="#4a9a9a"/></svg>
<div class="t tt" style="left:2593px;top:12.5px;width:26px;font-size:13px;line-height:16px;color:#dcebeb">The</div>
<div style="left:2629px;top:12px;width:1.6px;height:16px;background:#3f5456;"></div>
<div class="ic" style="left:2639px;top:12px;width:16px;height:16px;background:#6001d2;border-radius:0px;color:#fff;font-size:10px;font-weight:900">y!</div>
<div class="t tt" style="left:2663px;top:12.5px;width:26px;font-size:13px;line-height:16px;color:#dcebeb">fake</div>
<div style="left:2699px;top:12px;width:1.6px;height:16px;background:#3f5456;"></div>
<div class="ic" style="left:2709px;top:12px;width:16px;height:16px;background:#e01818;border-radius:0px;color:#fff;font-size:13px;font-weight:900">F</div>
<div class="t tt" style="left:2733px;top:12.5px;width:26px;font-size:13px;line-height:16px;color:#dcebeb">Gen</div>
<div style="left:2769px;top:12px;width:1.6px;height:16px;background:#3f5456;"></div>
<svg style="position:absolute;left:2779px;top:12px" width="16" height="16" viewBox="0 0 16 16"><rect width="16" height="16" rx="4" fill="#111"/><path d="M9 3 V10.5 A2.3 2.3 0 1 1 6.8 8.2 M9 3 Q9.5 5.5 12 5.8" stroke="#fff" stroke-width="1.7" fill="none"/><path d="M8.2 3.5 V10 A2.3 2.3 0 1 1 6 7.7" stroke="#25f4ee" stroke-width="0.7" fill="none" opacity="0.7"/></svg>
<div class="t tt" style="left:2803px;top:12.5px;width:26px;font-size:13px;line-height:16px;color:#dcebeb">TikT</div>
<div style="left:2839px;top:12px;width:1.6px;height:16px;background:#3f5456;"></div>
<svg style="position:absolute;left:2849px;top:12px" width="16" height="16" viewBox="0 0 16 16"><rect width="16" height="16" rx="4" fill="#111"/><path d="M9 3 V10.5 A2.3 2.3 0 1 1 6.8 8.2 M9 3 Q9.5 5.5 12 5.8" stroke="#fff" stroke-width="1.7" fill="none"/><path d="M8.2 3.5 V10 A2.3 2.3 0 1 1 6 7.7" stroke="#25f4ee" stroke-width="0.7" fill="none" opacity="0.7"/></svg>
<div class="t tt" style="left:2873px;top:12.5px;width:26px;font-size:13px;line-height:16px;color:#dcebeb">trusk</div>
<div style="left:2911px;top:6px;width:64px;height:40px;background:#283f41;border-radius:10px 10px 0 0"></div>
<svg style="position:absolute;left:2901px;top:26px;" width="10" height="14" viewBox="0 0 10 14"><path d="M0 14 Q10 14 10 4 L10 14 Z" fill="#283f41"/></svg>
<svg style="position:absolute;left:2975px;top:26px;" width="10" height="14" viewBox="0 0 10 14"><path d="M10 14 Q0 14 0 4 L0 14 Z" fill="#283f41"/></svg>
<div class="ic" style="left:2919px;top:12px;width:16px;height:16px;background:#6001d2;border-radius:0px;color:#fff;font-size:10px;font-weight:900">y!</div>
<svg style="position:absolute;left:2952px;top:14px;" width="12" height="12" viewBox="0 0 12 12"><path d="M2 2 L10 10 M10 2 L2 10" stroke="#dcebeb" stroke-width="1.6"/></svg>
<svg style="position:absolute;left:2988px;top:13px;" width="14" height="14" viewBox="0 0 14 14"><path d="M7 1 V13 M1 7 H13" stroke="#dcebeb" stroke-width="1.8"/></svg>
<svg style="position:absolute;left:3079px;top:13px;" width="14" height="14" viewBox="0 0 14 14"><path d="M1 6.5 H12" stroke="#6f8284" stroke-width="1.1"/></svg>
<svg style="position:absolute;left:3125px;top:14px;" width="14" height="14" viewBox="0 0 14 14"><rect x="1.5" y="3.5" width="8" height="8" rx="1.5" stroke="#6f8284" stroke-width="1.1" fill="none"/><path d="M4 1.5 H10 Q12 1.5 12 3.5 V9.5" stroke="#6f8284" stroke-width="1.1" fill="none"/></svg>
<svg style="position:absolute;left:3170px;top:13px;" width="14" height="14" viewBox="0 0 14 14"><path d="M1.5 1.5 L12.5 12.5 M12.5 1.5 L1.5 12.5" stroke="#6f8284" stroke-width="1.1"/></svg>
<div style="left:1600px;top:40px;width:1600px;height:80px;background:#283f41;border-radius:10px 10px 0 0"></div>
<svg style="position:absolute;left:1613px;top:55px;" width="18" height="16" viewBox="0 0 18 16"><path d="M16 8 H3 M8.5 2.5 L3 8 L8.5 13.5" stroke="#b9d1d0" stroke-width="1.7" fill="none"/></svg>
<svg style="position:absolute;left:1649px;top:55px;" width="18" height="16" viewBox="0 0 18 16"><path d="M2 8 H15 M9.5 2.5 L15 8 L9.5 13.5" stroke="#b9d1d0" stroke-width="1.7" fill="none" opacity="0.55"/></svg>
<svg style="position:absolute;left:1686px;top:55px;" width="16" height="16" viewBox="0 0 16 16"><path d="M13.4 9.4 A5.4 5.4 0 1 1 11.4 3.7" stroke="#b9d1d0" stroke-width="1.6" fill="none"/><path d="M14.1 1.8 V6.9 H9.1" stroke="#b9d1d0" stroke-width="1.6" fill="none"/></svg>
<svg style="position:absolute;left:1722px;top:55px;" width="16" height="16" viewBox="0 0 16 16"><path d="M2.7 14.2 V5.9 L8 1.9 L13.3 5.9 V14.2 H9.5 V9.4 H6.6 V14.2 Z" stroke="#b9d1d0" stroke-width="1.5" fill="none" stroke-linejoin="miter"/></svg>
<div style="left:1756px;top:46px;width:1138px;height:34px;background:#13262a;border-radius:17px"></div>
<div style="left:1761px;top:51px;width:24px;height:24px;background:#283f41;border-radius:12px"></div>
<svg style="position:absolute;left:1765px;top:56px;" width="16" height="14" viewBox="0 0 16 14"><circle cx="3.5" cy="3.5" r="1.9" stroke="#dcebeb" stroke-width="1.3" fill="none"/><path d="M7 3.5 H13" stroke="#dcebeb" stroke-width="1.4"/><circle cx="11.5" cy="10" r="1.9" stroke="#dcebeb" stroke-width="1.3" fill="none"/><path d="M2 10 H8" stroke="#dcebeb" stroke-width="1.4"/></svg>
<div class="t" style="left:1793px;top:55px;font-size:13.75px;line-height:16px;color:#dcebeb">qc.search.yahoo.com/yhs/search?hspart=airfind&amp;hsimp=yhs-06&amp;p=Letcher%20Farmer%206%207%2069&amp;type=50497__YHS</div>
<svg style="position:absolute;left:2861px;top:53px;" width="18" height="18" viewBox="0 0 18 18"><path d="M9 1.8 L11.1 6.6 L16.2 7 L12.3 10.4 L13.5 15.4 L9 12.7 L4.5 15.4 L5.7 10.4 L1.8 7 L6.9 6.6 Z" stroke="#b9d1d0" stroke-width="1.5" fill="none" stroke-linejoin="round"/></svg>
<svg style="position:absolute;left:2911px;top:53px;" width="18" height="18" viewBox="0 0 18 18"><path d="M3 5.5 H6.5 V4.3 A2 2 0 0 1 10.5 4.3 V5.5 H14 V8.8 H15.2 A1.9 1.9 0 0 1 15.2 12.6 H14 V16 H3 Z" stroke="#b9d1d0" stroke-width="1.5" fill="none" stroke-linejoin="round"/></svg>
<div style="left:2946px;top:55px;width:2px;height:16px;background:#3f5456;"></div>
<svg style="position:absolute;left:2965px;top:54px;" width="18" height="16" viewBox="0 0 18 16"><path d="M4.5 2 H13.5 L15 7 H3 Z" stroke="#b9d1d0" stroke-width="1.4" fill="none"/><path d="M1 7.5 H17" stroke="#b9d1d0" stroke-width="1.5"/><circle cx="5" cy="12" r="2.3" stroke="#b9d1d0" stroke-width="1.4" fill="none"/><circle cx="13" cy="12" r="2.3" stroke="#b9d1d0" stroke-width="1.4" fill="none"/><path d="M7.3 12 H10.7" stroke="#b9d1d0" stroke-width="1.3"/></svg>
<svg style="position:absolute;left:3003px;top:53px;" width="20" height="18" viewBox="0 0 20 18"><path d="M8 2 L10 6.6 L14.8 7 L11.2 10.2 L12.3 15 L8 12.4 L3.7 15 L4.8 10.2 L1.2 7 L6 6.6 Z" stroke="#b9d1d0" stroke-width="1.4" fill="none" stroke-linejoin="round"/><path d="M12 2.5 L14 6.8 M16.5 9.5 L15 15.5" stroke="#b9d1d0" stroke-width="1.3" fill="none"/></svg>
<svg style="position:absolute;left:3041px;top:53px;" width="18" height="18" viewBox="0 0 18 18"><path d="M3.2 5.5 A7 7 0 1 1 2.2 10" stroke="#b9d1d0" stroke-width="1.6" fill="none"/><path d="M1.6 2.5 V6.5 H5.6" stroke="#b9d1d0" stroke-width="1.5" fill="none"/><path d="M9 5.5 V9.5 L11.8 11.5" stroke="#b9d1d0" stroke-width="1.6" fill="none"/></svg>
<div style="left:3078px;top:55px;width:2px;height:16px;background:#3f5456;"></div>
<svg style="position:absolute;left:3097px;top:54px;" width="18" height="16" viewBox="0 0 18 16"><path d="M1 3 H11 M1 7 H11 M1 11 H7" stroke="#b9d1d0" stroke-width="1.5"/><path d="M13.5 12.5 V2.5 H17" stroke="#b9d1d0" stroke-width="1.5" fill="none"/><circle cx="11.8" cy="12.6" r="2.2" fill="#b9d1d0"/></svg>
<div style="left:3132px;top:53px;width:20px;height:20px;border-radius:10px;background:#7a5fb0"></div>
<svg style="position:absolute;left:3134px;top:55px;" width="16" height="18" viewBox="0 0 16 18"><ellipse cx="8" cy="10" rx="6" ry="8" fill="#1a1a1a"/><rect x="3" y="6" width="10" height="4" rx="2" fill="#e8e0f0"/><circle cx="6" cy="8" r="1" fill="#c02060"/><circle cx="10" cy="8" r="1" fill="#c02060"/></svg>
<svg style="position:absolute;left:3175px;top:55px;" width="6" height="18" viewBox="0 0 6 18"><circle cx="3" cy="3" r="1.6" fill="#b9d1d0"/><circle cx="3" cy="9" r="1.6" fill="#b9d1d0"/><circle cx="3" cy="15" r="1.6" fill="#b9d1d0"/></svg>
<svg style="position:absolute;left:1618px;top:92px;" width="16" height="16" viewBox="0 0 16 16"><rect x="1.5" y="1.5" width="5" height="5" stroke="#b9d1d0" stroke-width="1.4" fill="none"/><rect x="9.5" y="1.5" width="5" height="5" stroke="#b9d1d0" stroke-width="1.4" fill="none"/><rect x="1.5" y="9.5" width="5" height="5" stroke="#b9d1d0" stroke-width="1.4" fill="none"/><rect x="9.5" y="9.5" width="5" height="5" stroke="#b9d1d0" stroke-width="1.4" fill="none"/></svg>
<div style="left:1648px;top:92px;width:2px;height:16px;background:#3f5456;"></div>
<svg style="position:absolute;left:1664px;top:92px" width="16" height="16" viewBox="0 0 16 16"><circle cx="8" cy="8" r="8" fill="#0866ff"/><path d="M9 16 V10 H11 L11.3 7.7 H9 V6.4 C9 5.8 9.3 5.3 10.1 5.3 H11.4 V3.3 C10.9 3.2 10.3 3.2 9.7 3.2 C8 3.2 6.9 4.2 6.9 6 V7.7 H5 V10 H6.9 V16 Z" fill="#fff"/></svg>
<div class="t" style="left:1686px;top:93px;font-size:12px;line-height:15px;color:#dcebeb;white-space:nowrap">La Résistance Québ...</div>
<svg style="position:absolute;left:1818px;top:92px" width="16" height="16" viewBox="0 0 16 16"><defs><linearGradient id="ai" x1="0" y1="0" x2="1" y2="1"><stop offset="0" stop-color="#f0f"/><stop offset="0.5" stop-color="#0ff"/><stop offset="1" stop-color="#ff0"/></linearGradient></defs><circle cx="8" cy="8" r="7.5" fill="url(#ai)"/><circle cx="8" cy="8" r="3.5" fill="#fff"/></svg>
<div class="t" style="left:1840px;top:93px;font-size:12px;line-height:15px;color:#dcebeb;white-space:nowrap">AI Non-Euclidean S...</div>
<svg style="position:absolute;left:1972px;top:92px" width="16" height="16" viewBox="0 0 16 16"><path d="M1 4 H6 L7.5 5.5 H14 V13 H1 Z" fill="#e0a800"/><path d="M2 7 H15.5 L14 13.5 H1 Z" fill="#ffd030"/></svg>
<div class="t" style="left:1994px;top:93px;font-size:12px;line-height:15px;color:#dcebeb;white-space:nowrap">White Heart Emojis...</div>
<svg style="position:absolute;left:2126px;top:92px" width="16" height="16" viewBox="0 0 16 16"><rect width="16" height="16" fill="#fff"/><rect x="1" y="1" width="14" height="14" fill="#000"/><circle cx="4.5" cy="4.5" r="1.5" fill="#fff"/><circle cx="11.5" cy="4.5" r="1.5" fill="#fff"/><circle cx="8" cy="8" r="1.5" fill="#fff"/><circle cx="4.5" cy="11.5" r="1.5" fill="#fff"/><circle cx="11.5" cy="11.5" r="1.5" fill="#fff"/></svg>
<div class="t" style="left:2148px;top:93px;font-size:12px;line-height:15px;color:#dcebeb;white-space:nowrap">Perchance Hub — P...</div>
<svg style="position:absolute;left:2280px;top:92px" width="16" height="16" viewBox="0 0 16 16"><rect x="4" y="2" width="8" height="13" rx="2" fill="#d03030"/><rect x="5" y="6" width="6" height="5" fill="#f0e0c0"/></svg>
<div class="t" style="left:2302px;top:93px;font-size:12px;line-height:15px;color:#dcebeb;white-space:nowrap">Glitch Text Generato...</div>
<div class="ic" style="left:2434px;top:92px;width:16px;height:16px;background:transparent;border-radius:0px;color:#222;font-size:12px;font-weight:400">if</div>
<div class="t" style="left:2456px;top:93px;font-size:12px;line-height:15px;color:#dcebeb;white-space:nowrap">Font Changer (<i style="font-family:Liberation Serif;font-weight:700">copy</i>...</div>
<svg style="position:absolute;left:2588px;top:92px" width="16" height="16" viewBox="0 0 16 16"><rect x="4" y="2" width="8" height="13" rx="2" fill="#d03030"/><rect x="5" y="6" width="6" height="5" fill="#f0e0c0"/></svg>
<div class="t" style="left:2610px;top:93px;font-size:12px;line-height:15px;color:#dcebeb;white-space:nowrap">Font Changer Onlin...</div>
<svg style="position:absolute;left:2742px;top:92px" width="16" height="16" viewBox="0 0 16 16"><rect width="16" height="16" fill="#ff5500"/><path d="M2 11 V8 M4 11 V7 M6 11 V6 M8 11 V5" stroke="#fff" stroke-width="1.2"/><path d="M8 5 Q11 4 12 7 Q15 7 15 9 Q15 11 13 11 H8 Z" fill="#fff"/></svg>
<div class="t" style="left:2764px;top:93px;font-size:12px;line-height:15px;color:#dcebeb;white-space:nowrap">Stream Episode 17 -...</div>
<svg style="position:absolute;left:3034px;top:94px;" width="14" height="12" viewBox="0 0 14 12"><path d="M2 1.5 L6.5 6 L2 10.5 M7.5 1.5 L12 6 L7.5 10.5" stroke="#b9d1d0" stroke-width="1.5" fill="none"/></svg>
<div style="left:3064px;top:92px;width:2px;height:16px;background:#3f5456;"></div>
<svg style="position:absolute;left:3081px;top:92px;" width="18" height="16" viewBox="0 0 18 16"><path d="M1.5 3 H6.5 L8 4.8 H15.5 V13.5 H1.5 Z" stroke="#b9d1d0" stroke-width="1.4" fill="none" stroke-linejoin="round"/></svg>
<div class="t" style="left:3106px;top:93px;font-size:12px;line-height:15px;color:#dcebeb;white-space:nowrap">Tous les favoris</div>
<div style="left:0px;top:120px;width:1600px;height:57px;background:#3c3c3c;"></div>
<div style="left:0px;top:120px;width:1600px;height:1px;background:#54443f;"></div>
<svg style="position:absolute;left:24px;top:143px;" width="16" height="12" viewBox="0 0 16 12"><path d="M1 1.5 H15 M1 6 H15 M1 10.5 H15" stroke="#e8eaed" stroke-width="1.6"/></svg>
<div class="t" style="left:64px;top:143.57px;font-size:13.5px;line-height:13.5px;color:#ffffff;font-weight:700;font-family:"Liberation Sans", sans-serif;">R32-413-1960-eng.pdf</div>
<div style="left:656px;top:139px;width:31px;height:20px;background:#1f1f1f;"></div>
<div class="t" style="left:667px;top:143.00px;font-size:13px;line-height:13px;color:#ffffff;font-weight:400;font-family:"Liberation Sans", sans-serif;">1</div>
<div class="t" style="left:690px;top:143.00px;font-size:13px;line-height:13px;color:#ffffff;font-weight:400;font-family:"Liberation Sans", sans-serif;">/ 208</div>
<div style="left:742px;top:139px;width:1px;height:20px;background:#707070;"></div>
<svg style="position:absolute;left:757px;top:144px;" width="12" height="10" viewBox="0 0 12 10"><path d="M1 5 H11" stroke="#e8eaed" stroke-width="1.6"/></svg>
<div style="left:783px;top:139px;width:44px;height:20px;background:#1f1f1f;"></div>
<div class="t" style="left:790px;top:143.00px;font-size:13px;line-height:13px;color:#ffffff;font-weight:400;font-family:"Liberation Sans", sans-serif;">100%</div>
<svg style="position:absolute;left:841px;top:143px;" width="12" height="12" viewBox="0 0 12 12"><path d="M6 1 V11 M1 6 H11" stroke="#e8eaed" stroke-width="1.7"/></svg>
<div style="left:867px;top:139px;width:1px;height:20px;background:#707070;"></div>
<svg style="position:absolute;left:888px;top:140px;" width="16" height="18" viewBox="0 0 16 18"><rect x="2.6" y="1.6" width="11" height="15" rx="1.5" stroke="#e8eaed" stroke-width="1.3" fill="none"/><path d="M6 6 L8 4.3 L10 6 M6 11.5 L8 13.2 L10 11.5" stroke="#e8eaed" stroke-width="1" fill="none"/></svg>
<svg style="position:absolute;left:918px;top:140px;" width="20" height="18" viewBox="0 0 20 18"><path d="M8 3.5 A6.3 6.3 0 1 1 8.5 16" stroke="#e8eaed" stroke-width="1.4" fill="none"/><path d="M10 1 L7.5 3.6 L10 6" stroke="#e8eaed" stroke-width="1.3" fill="none"/><path d="M6 6.5 L10.5 11 L6 15.5 L1.5 11 Z" stroke="#e8eaed" stroke-width="1.4" fill="none"/></svg>
<svg style="position:absolute;left:1487px;top:140px;" width="18" height="18" viewBox="0 0 18 18"><path d="M9 2 V11.5 M5 7.8 L9 11.5 L13 7.8" stroke="#e8eaed" stroke-width="1.5" fill="none"/><path d="M3.5 12.5 V14.5 H14.5 V12.5" stroke="#e8eaed" stroke-width="1.5" fill="none"/></svg>
<svg style="position:absolute;left:1523px;top:140px;" width="18" height="18" viewBox="0 0 18 18"><rect x="1.5" y="6" width="15" height="7" rx="1.5" stroke="#e8eaed" stroke-width="1.6" fill="none"/><path d="M4.5 6 V2.5 H13.5 V6 M4.5 11 V15.5 H13.5 V11" stroke="#e8eaed" stroke-width="1.6" fill="none"/></svg>
<svg style="position:absolute;left:1565px;top:140px;" width="6" height="18" viewBox="0 0 6 18"><circle cx="3" cy="4.5" r="1.6" fill="#e8eaed"/><circle cx="3" cy="9" r="1.6" fill="#e8eaed"/><circle cx="3" cy="13.5" r="1.6" fill="#e8eaed"/></svg>
<div style="left:0px;top:177px;width:285px;height:675px;background:#292a2c;"></div>
<div style="left:285px;top:177px;width:15px;height:675px;background:#fcfcfc;"></div>
<svg style="position:absolute;left:285px;top:180px;" width="15" height="12" viewBox="0 0 15 12"><path d="M3.5 9.5 L7.5 3 L11.5 9.5 Z" fill="#8a8a8a" stroke="#8a8a8a" stroke-width="1" stroke-linejoin="round"/></svg>
<div style="left:288px;top:195px;width:9px;height:17px;background:#8a8a8a;border-radius:4.5px"></div>
<svg style="position:absolute;left:285px;top:838px;" width="15" height="12" viewBox="0 0 15 12"><path d="M3.5 2.5 L7.5 9 L11.5 2.5 Z" fill="#8a8a8a" stroke="#8a8a8a" stroke-width="1" stroke-linejoin="round"/></svg>
<div style="left:300px;top:177px;width:1285px;height:675px;background:#282828;"></div>
<div style="left:1585px;top:177px;width:15px;height:675px;background:#fcfcfc;"></div>
<svg style="position:absolute;left:1585px;top:180px;" width="15" height="12" viewBox="0 0 15 12"><path d="M3.5 9.5 L7.5 3 L11.5 9.5 Z" fill="#8a8a8a" stroke="#8a8a8a" stroke-width="1" stroke-linejoin="round"/></svg>
<div style="left:1588px;top:195px;width:9px;height:17px;background:#8a8a8a;border-radius:4.5px"></div>
<svg style="position:absolute;left:1585px;top:838px;" width="15" height="12" viewBox="0 0 15 12"><path d="M3.5 2.5 L7.5 9 L11.5 2.5 Z" fill="#8a8a8a" stroke="#8a8a8a" stroke-width="1" stroke-linejoin="round"/></svg>
<div style="left:83px;top:195px;width:120px;height:152px;background:#8ab4f8;"></div>
<div style="left:89px;top:201px;width:108px;height:140px;background:#060604;"></div>
<div style="left:194px;top:201px;width:3px;height:140px;background:#f4f4f4;"></div>
<div style="left:124px;top:236px;width:51px;height:26px;background:#eeebe4;"></div>
<div style="left:129.0px;top:241px;width:40px;height:1.2px;background:#777;"></div>
<div style="left:143.0px;top:245px;width:12px;height:1.2px;background:#777;"></div>
<div style="left:140.0px;top:249px;width:18px;height:1.2px;background:#777;"></div>
<div style="left:139.0px;top:253px;width:20px;height:1.2px;background:#777;"></div>
<div style="left:132.0px;top:257px;width:34px;height:1.2px;background:#777;"></div>
<div style="left:97px;top:321px;width:13px;height:20px;background:#e8e4dc;"></div>
<div class="t" style="left:138px;top:353.50px;font-size:13px;line-height:13px;color:#e8eaed;font-weight:400;font-family:"Liberation Sans", sans-serif;">1</div>
<div class="t" style="left:138px;top:543.00px;font-size:13px;line-height:13px;color:#e8eaed;font-weight:400;font-family:"Liberation Sans", sans-serif;">2</div>
<div style="left:89px;top:390px;width:108px;height:140px;background:#9b9b9b;"></div>
<div style="left:92px;top:403px;width:5px;height:5px;border-radius:3px;background:#1a1a1a"></div>
<div style="left:92px;top:457px;width:5px;height:5px;border-radius:3px;background:#1a1a1a"></div>
<div style="left:92px;top:511px;width:5px;height:5px;border-radius:3px;background:#1a1a1a"></div>
<div style="left:147px;top:406px;width:13px;height:1.3px;background:#4a4a4a;"></div>
<div style="left:146px;top:430.5px;width:21px;height:1.3px;background:#4a4a4a;"></div>
<div style="left:154px;top:435.5px;width:3px;height:1.3px;background:#4a4a4a;"></div>
<div style="left:144.5px;top:440px;width:23.5px;height:1.3px;background:#4a4a4a;"></div>
<div style="left:148px;top:445px;width:15px;height:1.3px;background:#4a4a4a;"></div>
<div style="left:155px;top:458px;width:2px;height:1.3px;background:#4a4a4a;"></div>
<div style="left:148px;top:463px;width:15px;height:1.3px;background:#4a4a4a;"></div>
<div style="left:152px;top:501px;width:7px;height:1.3px;background:#4a4a4a;"></div>
<div style="left:152px;top:393px;width:31px;height:8px;border:1px solid #b0b0b0;border-radius:3px"></div>
<div style="left:114px;top:474px;width:24px;height:17px;border:1px solid #505050"></div>
<div style="left:116px;top:477px;width:20px;height:1px;background:#666;"></div>
<div style="left:116px;top:480px;width:20px;height:1px;background:#666;"></div>
<div style="left:116px;top:484px;width:20px;height:1px;background:#666;"></div>
<div style="left:116px;top:488px;width:20px;height:1px;background:#666;"></div>
<div style="left:108px;top:510px;width:68px;height:1.3px;background:#777;"></div>
<div style="left:117px;top:515px;width:30px;height:1.3px;background:#777;"></div>
<div style="left:107px;top:513px;width:2px;height:6px;background:#666;"></div>
<div style="left:177px;top:524.5px;width:10px;height:1.5px;background:#555;"></div>
<div style="left:89px;top:579px;width:108px;height:140px;background:#9b9b9b;"></div>
<div style="left:92px;top:594px;width:5px;height:5px;border-radius:3px;background:#1a1a1a"></div>
<div style="left:92px;top:647px;width:5px;height:5px;border-radius:3px;background:#1a1a1a"></div>
<div style="left:92px;top:702px;width:5px;height:5px;border-radius:3px;background:#1a1a1a"></div>
<div style="left:134px;top:590.0px;width:20px;height:1px;background:#6a6a6a;"></div>
<div style="left:172px;top:590.0px;width:4px;height:1px;background:#777777;"></div>
<div style="left:134px;top:593.5px;width:18px;height:1px;background:#6a6a6a;"></div>
<div style="left:172px;top:593.5px;width:4px;height:1px;background:#777777;"></div>
<div style="left:134px;top:597.0px;width:24px;height:1px;background:#6a6a6a;"></div>
<div style="left:172px;top:597.0px;width:4px;height:1px;background:#777777;"></div>
<div style="left:134px;top:600.5px;width:17px;height:1px;background:#6a6a6a;"></div>
<div style="left:172px;top:600.5px;width:4px;height:1px;background:#777777;"></div>
<div style="left:134px;top:604.0px;width:16px;height:1px;background:#6a6a6a;"></div>
<div style="left:172px;top:604.0px;width:4px;height:1px;background:#777777;"></div>
<div style="left:134px;top:607.5px;width:14px;height:1px;background:#6a6a6a;"></div>
<div style="left:172px;top:607.5px;width:4px;height:1px;background:#777777;"></div>
<div style="left:134px;top:611.0px;width:17px;height:1px;background:#6a6a6a;"></div>
<div style="left:172px;top:611.0px;width:4px;height:1px;background:#777777;"></div>
<div style="left:134px;top:614.5px;width:22px;height:1px;background:#6a6a6a;"></div>
<div style="left:172px;top:614.5px;width:4px;height:1px;background:#777777;"></div>
<div style="left:134px;top:618.0px;width:20px;height:1px;background:#6a6a6a;"></div>
<div style="left:172px;top:618.0px;width:4px;height:1px;background:#777777;"></div>
<div style="left:134px;top:621.5px;width:20px;height:1px;background:#6a6a6a;"></div>
<div style="left:172px;top:621.5px;width:4px;height:1px;background:#777777;"></div>
<div style="left:134px;top:625.0px;width:17px;height:1px;background:#6a6a6a;"></div>
<div style="left:172px;top:625.0px;width:4px;height:1px;background:#777777;"></div>
<div style="left:134px;top:628.5px;width:17px;height:1px;background:#6a6a6a;"></div>
<div style="left:172px;top:628.5px;width:4px;height:1px;background:#777777;"></div>
<div style="left:134px;top:632.0px;width:12px;height:1px;background:#6a6a6a;"></div>
<div style="left:172px;top:632.0px;width:4px;height:1px;background:#777777;"></div>
<div style="left:134px;top:635.5px;width:18px;height:1px;background:#6a6a6a;"></div>
<div style="left:172px;top:635.5px;width:4px;height:1px;background:#777777;"></div>
<div style="left:134px;top:639.0px;width:20px;height:1px;background:#6a6a6a;"></div>
<div style="left:172px;top:639.0px;width:4px;height:1px;background:#777777;"></div>
<div style="left:134px;top:642.5px;width:18px;height:1px;background:#6a6a6a;"></div>
<div style="left:172px;top:642.5px;width:4px;height:1px;background:#777777;"></div>
<div style="left:134px;top:646.0px;width:12px;height:1px;background:#6a6a6a;"></div>
<div style="left:172px;top:646.0px;width:4px;height:1px;background:#777777;"></div>
<div style="left:134px;top:649.5px;width:14px;height:1px;background:#6a6a6a;"></div>
<div style="left:172px;top:649.5px;width:4px;height:1px;background:#777777;"></div>
<div style="left:134px;top:653.0px;width:16px;height:1px;background:#6a6a6a;"></div>
<div style="left:172px;top:653.0px;width:4px;height:1px;background:#777777;"></div>
<div style="left:134px;top:656.5px;width:18px;height:1px;background:#6a6a6a;"></div>
<div style="left:172px;top:656.5px;width:4px;height:1px;background:#777777;"></div>
<div style="left:134px;top:660.0px;width:14px;height:1px;background:#6a6a6a;"></div>
<div style="left:172px;top:660.0px;width:4px;height:1px;background:#777777;"></div>
<div style="left:134px;top:663.5px;width:22px;height:1px;background:#6a6a6a;"></div>
<div style="left:172px;top:663.5px;width:4px;height:1px;background:#777777;"></div>
<div style="left:134px;top:667.0px;width:14px;height:1px;background:#6a6a6a;"></div>
<div style="left:172px;top:667.0px;width:4px;height:1px;background:#777777;"></div>
<div style="left:134px;top:670.5px;width:22px;height:1px;background:#6a6a6a;"></div>
<div style="left:172px;top:670.5px;width:4px;height:1px;background:#777777;"></div>
<div style="left:134px;top:674.0px;width:17px;height:1px;background:#6a6a6a;"></div>
<div style="left:172px;top:674.0px;width:4px;height:1px;background:#777777;"></div>
<div style="left:134px;top:677.5px;width:12px;height:1px;background:#6a6a6a;"></div>
<div style="left:172px;top:677.5px;width:4px;height:1px;background:#777777;"></div>
<div style="left:134px;top:681.0px;width:12px;height:1px;background:#6a6a6a;"></div>
<div style="left:172px;top:681.0px;width:4px;height:1px;background:#777777;"></div>
<div style="left:134px;top:684.5px;width:12px;height:1px;background:#6a6a6a;"></div>
<div style="left:172px;top:684.5px;width:4px;height:1px;background:#777777;"></div>
<div style="left:134px;top:688.0px;width:17px;height:1px;background:#6a6a6a;"></div>
<div style="left:172px;top:688.0px;width:4px;height:1px;background:#777777;"></div>
<div style="left:134px;top:691.5px;width:18px;height:1px;background:#6a6a6a;"></div>
<div style="left:172px;top:691.5px;width:4px;height:1px;background:#777777;"></div>
<div style="left:134px;top:695.0px;width:24px;height:1px;background:#6a6a6a;"></div>
<div style="left:172px;top:695.0px;width:4px;height:1px;background:#777777;"></div>
<div style="left:134px;top:698.5px;width:16px;height:1px;background:#6a6a6a;"></div>
<div style="left:172px;top:698.5px;width:4px;height:1px;background:#777777;"></div>
<div style="left:134px;top:702.0px;width:14px;height:1px;background:#6a6a6a;"></div>
<div style="left:172px;top:702.0px;width:4px;height:1px;background:#777777;"></div>
<div style="left:134px;top:705.5px;width:18px;height:1px;background:#6a6a6a;"></div>
<div style="left:172px;top:705.5px;width:4px;height:1px;background:#777777;"></div>
<div class="t" style="left:138px;top:732.00px;font-size:13px;line-height:13px;color:#e8eaed;font-weight:400;font-family:"Liberation Sans", sans-serif;">3</div>
<div style="left:89px;top:768px;width:108px;height:140px;background:#9b9b9b;"></div>
<div style="left:95px;top:781px;width:5px;height:5px;border-radius:3px;background:#1a1a1a"></div>
<div style="left:95px;top:834px;width:5px;height:5px;border-radius:3px;background:#1a1a1a"></div>
<div style="left:134px;top:778.0px;width:17px;height:1px;background:#6a6a6a;"></div>
<div style="left:172px;top:778.0px;width:4px;height:1px;background:#777777;"></div>
<div style="left:134px;top:781.5px;width:20px;height:1px;background:#6a6a6a;"></div>
<div style="left:172px;top:781.5px;width:4px;height:1px;background:#777777;"></div>
<div style="left:134px;top:785.0px;width:22px;height:1px;background:#6a6a6a;"></div>
<div style="left:172px;top:785.0px;width:4px;height:1px;background:#777777;"></div>
<div style="left:134px;top:788.5px;width:12px;height:1px;background:#6a6a6a;"></div>
<div style="left:172px;top:788.5px;width:4px;height:1px;background:#777777;"></div>
<div style="left:134px;top:792.0px;width:22px;height:1px;background:#6a6a6a;"></div>
<div style="left:172px;top:792.0px;width:4px;height:1px;background:#777777;"></div>
<div style="left:134px;top:795.5px;width:12px;height:1px;background:#6a6a6a;"></div>
<div style="left:172px;top:795.5px;width:4px;height:1px;background:#777777;"></div>
<div style="left:134px;top:799.0px;width:12px;height:1px;background:#6a6a6a;"></div>
<div style="left:172px;top:799.0px;width:4px;height:1px;background:#777777;"></div>
<div style="left:134px;top:802.5px;width:24px;height:1px;background:#6a6a6a;"></div>
<div style="left:172px;top:802.5px;width:4px;height:1px;background:#777777;"></div>
<div style="left:134px;top:806.0px;width:12px;height:1px;background:#6a6a6a;"></div>
<div style="left:172px;top:806.0px;width:4px;height:1px;background:#777777;"></div>
<div style="left:134px;top:809.5px;width:20px;height:1px;background:#6a6a6a;"></div>
<div style="left:172px;top:809.5px;width:4px;height:1px;background:#777777;"></div>
<div style="left:134px;top:813.0px;width:24px;height:1px;background:#6a6a6a;"></div>
<div style="left:172px;top:813.0px;width:4px;height:1px;background:#777777;"></div>
<div style="left:134px;top:816.5px;width:14px;height:1px;background:#6a6a6a;"></div>
<div style="left:172px;top:816.5px;width:4px;height:1px;background:#777777;"></div>
<div style="left:134px;top:820.0px;width:22px;height:1px;background:#6a6a6a;"></div>
<div style="left:172px;top:820.0px;width:4px;height:1px;background:#777777;"></div>
<div style="left:134px;top:823.5px;width:18px;height:1px;background:#6a6a6a;"></div>
<div style="left:172px;top:823.5px;width:4px;height:1px;background:#777777;"></div>
<div style="left:134px;top:827.0px;width:24px;height:1px;background:#6a6a6a;"></div>
<div style="left:172px;top:827.0px;width:4px;height:1px;background:#777777;"></div>
<div style="left:134px;top:830.5px;width:16px;height:1px;background:#6a6a6a;"></div>
<div style="left:172px;top:830.5px;width:4px;height:1px;background:#777777;"></div>
<div style="left:134px;top:834.0px;width:20px;height:1px;background:#6a6a6a;"></div>
<div style="left:172px;top:834.0px;width:4px;height:1px;background:#777777;"></div>
<div style="left:134px;top:837.5px;width:22px;height:1px;background:#6a6a6a;"></div>
<div style="left:172px;top:837.5px;width:4px;height:1px;background:#777777;"></div>
<div style="left:134px;top:841.0px;width:22px;height:1px;background:#6a6a6a;"></div>
<div style="left:172px;top:841.0px;width:4px;height:1px;background:#777777;"></div>
<div style="left:134px;top:844.5px;width:16px;height:1px;background:#6a6a6a;"></div>
<div style="left:172px;top:844.5px;width:4px;height:1px;background:#777777;"></div>
<div style="left:134px;top:848.0px;width:16px;height:1px;background:#6a6a6a;"></div>
<div style="left:172px;top:848.0px;width:4px;height:1px;background:#777777;"></div>
<div style="left:134px;top:851.5px;width:17px;height:1px;background:#6a6a6a;"></div>
<div style="left:172px;top:851.5px;width:4px;height:1px;background:#777777;"></div>
<div style="left:134px;top:855.0px;width:17px;height:1px;background:#6a6a6a;"></div>
<div style="left:172px;top:855.0px;width:4px;height:1px;background:#777777;"></div>
<div style="left:134px;top:858.5px;width:16px;height:1px;background:#6a6a6a;"></div>
<div style="left:172px;top:858.5px;width:4px;height:1px;background:#777777;"></div>
<div style="left:134px;top:862.0px;width:24px;height:1px;background:#6a6a6a;"></div>
<div style="left:172px;top:862.0px;width:4px;height:1px;background:#777777;"></div>
<div style="left:134px;top:865.5px;width:16px;height:1px;background:#6a6a6a;"></div>
<div style="left:172px;top:865.5px;width:4px;height:1px;background:#777777;"></div>
<div style="left:134px;top:869.0px;width:12px;height:1px;background:#6a6a6a;"></div>
<div style="left:172px;top:869.0px;width:4px;height:1px;background:#777777;"></div>
<div style="left:134px;top:872.5px;width:18px;height:1px;background:#6a6a6a;"></div>
<div style="left:172px;top:872.5px;width:4px;height:1px;background:#777777;"></div>
<div style="left:134px;top:876.0px;width:14px;height:1px;background:#6a6a6a;"></div>
<div style="left:172px;top:876.0px;width:4px;height:1px;background:#777777;"></div>
<div style="left:134px;top:879.5px;width:22px;height:1px;background:#6a6a6a;"></div>
<div style="left:172px;top:879.5px;width:4px;height:1px;background:#777777;"></div>
<div style="left:99.5px;top:768px;width:1px;height:140px;background:#5a5a5a;"></div>
<div style="left:0px;top:852px;width:285px;height:0px;background:#000;"></div>
<div style="left:540px;top:180px;width:782px;height:672px;background:#050503;"></div>
<div style="left:541px;top:180px;width:2px;height:672px;background:#9a948a;opacity:0.7"></div>
<div style="left:1322px;top:180px;width:23px;height:672px;background:#fdfdfd;"></div>
<div style="left:571px;top:180px;width:5px;height:24px;background:#e8e4dc;border-radius:0 0 3px 3px"></div>
<div style="left:800px;top:445px;width:384px;height:192px;background:#f1efea;border-radius:7px"></div>
<div class="t" style="left:800px;top:471px;width:384px;text-align:center;font-family:'Liberation Serif',serif;font-weight:700;font-size:16px;line-height:19px;color:#111">Historical directory of Indian agents and agencies in<br>Canada</div>
<div class="t" style="left:800px;top:525.5px;width:384px;text-align:center;font-family:'Liberation Serif',serif;font-size:16px;line-height:19px;color:#151515">G. M. Matheson</div>
<div class="t" style="left:800px;top:562.3px;width:384px;text-align:center;font-family:'Liberation Serif',serif;font-size:16px;line-height:19px;color:#151515">[S.l. : s.n.], n.d. 297 p.</div>
<div class="t" style="left:800px;top:597px;width:384px;text-align:center;font-family:'Liberation Serif',serif;font-size:16px;line-height:19px;color:#151515">Claims and Historical Research Centre: B.28</div>
<div style="left:1600px;top:120px;width:1585px;height:732px;background:#ffffff;"></div>
<div style="left:3185px;top:120px;width:15px;height:732px;background:#fafafa;"></div>
<div style="left:1600px;top:120px;width:1600px;height:1px;background:#1f3335;"></div>
<svg style="position:absolute;left:3185px;top:123px;" width="15" height="12" viewBox="0 0 15 12"><path d="M3.5 9.5 L7.5 3 L11.5 9.5 Z" fill="#8a8a8a" stroke="#8a8a8a" stroke-width="1" stroke-linejoin="round"/></svg>
<div style="left:3188px;top:139px;width:9px;height:443px;background:#8a8a8a;border-radius:4.5px"></div>
<svg style="position:absolute;left:3185px;top:838px;" width="15" height="12" viewBox="0 0 15 12"><path d="M3.5 2.5 L7.5 9 L11.5 2.5 Z" fill="#8a8a8a" stroke="#8a8a8a" stroke-width="1" stroke-linejoin="round"/></svg>
<div style="left:1708px;top:141px;width:680px;height:45px;background:#fff;border-radius:23px;box-shadow:0 1px 6px rgba(32,33,36,0.28)"></div>
<svg style="position:absolute;left:1722px;top:154px;" width="20" height="20" viewBox="0 0 20 20"><circle cx="8" cy="8" r="5.6" stroke="#202124" stroke-width="1.8" fill="none"/><path d="M12 12 L17 17" stroke="#202124" stroke-width="2"/></svg>
<div style="left:1752px;top:155px;width:157px;height:19px;background:#c8c8c8;"></div>
<div class="t" style="left:1752px;top:156.63px;font-size:15.8px;line-height:15.8px;color:#333333;font-weight:400;font-family:"Liberation Sans", sans-serif;">Letcher Farmer 6 7 69</div>
<svg style="position:absolute;left:2262px;top:156px;" width="18" height="18" viewBox="0 0 18 18"><path d="M2.3 2.3 L15.7 15.7 M15.7 2.3 L2.3 15.7" stroke="#70757a" stroke-width="1.8"/></svg>
<div style="left:2295px;top:150px;width:1px;height:27px;background:#dadce0;"></div>
<svg style="position:absolute;left:2316px;top:155px;" width="16" height="22" viewBox="0 0 16 22"><rect x="5.2" y="1" width="5.6" height="10.5" rx="2.8" fill="#4285f4"/><path d="M2.6 8 A5.4 5.4 0 0 0 13.4 8" stroke="#4285f4" stroke-width="1.5" fill="none"/><path d="M8 13.5 V16.5 M5 17 H11" stroke="#4285f4" stroke-width="1.5"/></svg>
<svg style="position:absolute;left:2350px;top:155px;" width="22" height="22" viewBox="0 0 22 22"><circle cx="8.5" cy="8" r="5.6" stroke="#3b82f0" stroke-width="2.4" fill="none"/><path d="M12.7 12.2 L17.6 17.1" stroke="#3b82f0" stroke-width="2.6" stroke-linecap="round"/></svg>
<div class="t" style="left:3077px;top:151.4px;font-size:22px;line-height:22px;font-weight:700;color:#6001d2;letter-spacing:-0.3px;-webkit-text-stroke:0.9px #6001d2;font-family:'Liberation Sans',sans-serif">yahoo<i>!</i></div>
<div class="t" style="left:1752px;top:215.70px;font-size:13.35px;line-height:13.35px;color:#4d5156;font-weight:400;font-family:"Liberation Sans", sans-serif;">Tous les résultats</div>
<svg style="position:absolute;left:1858px;top:220px;" width="10" height="8" viewBox="0 0 10 8"><path d="M1.5 1.5 L5 5 L8.5 1.5" stroke="#5f6368" stroke-width="1.2" fill="none"/></svg>
<div style="left:1600px;top:242px;width:1585px;height:1px;background:#dfe1e5;"></div>
<div class="t" style="left:1752px;top:257.32px;font-size:13.8px;line-height:13.8px;color:#70757a;font-weight:400;font-family:"Liberation Sans", sans-serif;">Environ 47&#8239;700&#8239;000 résultats de recherche</div>
<div class="t" style="left:1752px;top:294.23px;font-size:13.9px;line-height:13.9px;color:#202124;font-weight:400;font-family:"Liberation Sans", sans-serif;"><span style="color:#202124">www.facebook.com</span><span style="color:#4d5156"> › public › Letcher-Farmer</span></div>
<div class="t" style="left:1752px;top:319.60px;font-size:17.6px;line-height:17.6px;color:#1a0dab;font-weight:400;font-family:"Liberation Sans", sans-serif;">Letcher Farmer Profiles - Facebook</div>
<div class="t" style="left:1752px;top:347.23px;font-size:13.9px;line-height:13.9px;color:#4d5156;font-weight:400;font-family:"Liberation Sans", sans-serif;">View the profiles of people named <b style="color:#3c4043">Letcher Farmer</b>. Join Facebook to connect with <b style="color:#3c4043">Letcher Farmer</b></div>
<div class="t" style="left:1752px;top:369.23px;font-size:13.9px;line-height:13.9px;color:#4d5156;font-weight:400;font-family:"Liberation Sans", sans-serif;">and others you may know. Facebook gives people the power...</div>
<div class="t" style="left:1752px;top:417.23px;font-size:13.9px;line-height:13.9px;color:#202124;font-weight:400;font-family:"Liberation Sans", sans-serif;"><span style="color:#202124">www.instagram.com</span><span style="color:#4d5156"> › letcherfarmer</span></div>
<div class="t" style="left:1752px;top:442.60px;font-size:17.6px;line-height:17.6px;color:#1a0dab;font-weight:400;font-family:"Liberation Sans", sans-serif;">Letcher Farmer (@letcherfarmer) • Instagram photos and videos</div>
<div class="t" style="left:1752px;top:470.23px;font-size:13.9px;line-height:13.9px;color:#4d5156;font-weight:400;font-family:"Liberation Sans", sans-serif;">72 Followers, <b style="color:#3c4043">7</b> Following, 0 Posts - See Instagram photos and videos from <b style="color:#3c4043">Letcher Farmer</b></div>
<div class="t" style="left:1752px;top:492.23px;font-size:13.9px;line-height:13.9px;color:#4d5156;font-weight:400;font-family:"Liberation Sans", sans-serif;">(@letcherfarmer)</div>
<div class="t" style="left:1752px;top:542.23px;font-size:13.9px;line-height:13.9px;color:#202124;font-weight:400;font-family:"Liberation Sans", sans-serif;"><span style="color:#202124">www.linkedin.com</span><span style="color:#4d5156"> › pub › dir</span></div>
<div class="t" style="left:1752px;top:567.60px;font-size:17.6px;line-height:17.6px;color:#1a0dab;font-weight:400;font-family:"Liberation Sans", sans-serif;">Letcher Farmer - Westfield, Indiana, United States ... - LinkedIn</div>
<div class="t" style="left:1752px;top:595.23px;font-size:13.9px;line-height:13.9px;color:#4d5156;font-weight:400;font-family:"Liberation Sans", sans-serif;">– · Location: 46074. View <b style="color:#3c4043">Letcher Farmer’s</b> profile on LinkedIn, a professional community of 1 billion</div>
<div class="t" style="left:1752px;top:617.23px;font-size:13.9px;line-height:13.9px;color:#4d5156;font-weight:400;font-family:"Liberation Sans", sans-serif;">members.</div>
<div class="t" style="left:1752px;top:666.23px;font-size:13.9px;line-height:13.9px;color:#202124;font-weight:400;font-family:"Liberation Sans", sans-serif;"><span style="color:#202124">www.youtube.com</span><span style="color:#4d5156"> › @farmerfletcher</span></div>
<div class="t" style="left:1752px;top:691.60px;font-size:17.6px;line-height:17.6px;color:#1a0dab;font-weight:400;font-family:"Liberation Sans", sans-serif;">Farmer Fletcher - YouTube</div>
<div class="t" style="left:1752px;top:719.23px;font-size:13.9px;line-height:13.9px;color:#4d5156;font-weight:400;font-family:"Liberation Sans", sans-serif;">Preparing for the upcoming harvest</div>
<div class="t" style="left:1752px;top:768.23px;font-size:13.9px;line-height:13.9px;color:#202124;font-weight:400;font-family:"Liberation Sans", sans-serif;"><span style="color:#202124">www.geni.com</span><span style="color:#4d5156"> › people › Letcher-Farmer</span></div>
<div class="t" style="left:1752px;top:793.60px;font-size:17.6px;line-height:17.6px;color:#1a0dab;font-weight:400;font-family:"Liberation Sans", sans-serif;">Letcher Farmer (1895 - 1965) - Genealogy - Geni.com</div>
<div class="t" style="left:1752px;top:821.23px;font-size:13.9px;line-height:13.9px;color:#4d5156;font-weight:400;font-family:"Liberation Sans", sans-serif;">Genealogy for <b style="color:#3c4043">Letcher Farmer</b> (1895 - 1965) family tree on Geni, with over 245 million profiles of</div>
<div class="t" style="left:1752px;top:843.23px;font-size:13.9px;line-height:13.9px;color:#4d5156;font-weight:400;font-family:"Liberation Sans", sans-serif;">ancestors and living relatives</div>
<div style="left:0px;top:852px;width:1600px;height:48px;background:linear-gradient(90deg,#cde8eb 0%,#d0e7ea 30%,#dce5e4 48%,#dfe5e4 58%,#d6e8ea 72%,#d0e9ec 85%,#cfe9ec 100%);border-top:1px solid #b4c8cc"></div>
<svg style="position:absolute;left:21px;top:865px;" width="23" height="23" viewBox="0 0 23 23"><defs><linearGradient id="wg0" x1="0" y1="0" x2="1" y2="1"><stop offset="0" stop-color="#4cc2ff"/><stop offset="1" stop-color="#0063d1"/></linearGradient></defs><rect x="0" y="0" width="10.8" height="10.8" rx="1" fill="url(#wg0)"/><rect x="12.2" y="0" width="10.8" height="10.8" rx="1" fill="url(#wg0)"/><rect x="0" y="12.2" width="10.8" height="10.8" rx="1" fill="url(#wg0)"/><rect x="12.2" y="12.2" width="10.8" height="10.8" rx="1" fill="url(#wg0)"/></svg>
<div style="left:58px;top:860px;width:218px;height:31px;border-radius:16px;background:#eef6f7;border:1px solid #c5d6da"></div>
<svg style="position:absolute;left:67px;top:866px;" width="20" height="20" viewBox="0 0 20 20"><circle cx="8.5" cy="8.5" r="6" stroke="#1c1c1c" stroke-width="1.7" fill="none"/><path d="M13 13 L17.5 17.5" stroke="#1c1c1c" stroke-width="1.9"/></svg>
<div class="t" style="left:94px;top:869.91px;font-size:13.1px;line-height:13.1px;color:#5a5a5a;font-weight:400;font-family:"Liberation Sans", sans-serif;">Rechercher</div>
<svg style="position:absolute;left:226px;top:862px;" width="46" height="28" viewBox="0 0 46 28"><ellipse cx="23" cy="19" rx="10" ry="6" fill="#b0402a"/><path d="M12 22 Q8 15 14 12" stroke="#a05030" stroke-width="3" fill="none"/><path d="M18 6 V16 M22 4 V15 M26 5 V14" stroke="#d8a030" stroke-width="1.6"/><path d="M28 5 Q40 6 36 20" stroke="#c08060" stroke-width="1" fill="none"/><path d="M4 4 V9 M4 4 L8 3 V8" stroke="#7a5a9a" stroke-width="1"/><circle cx="4" cy="9" r="1.3" fill="#7a5a9a"/><path d="M40 14 V21" stroke="#7a5a9a" stroke-width="1"/><circle cx="39" cy="21" r="1.5" fill="#7a5a9a"/></svg>
<svg style="position:absolute;left:289px;top:864px;" width="25" height="24" viewBox="0 0 25 24"><rect x="7" y="0" width="17" height="17" fill="#fafafa" stroke="#ddd" stroke-width="0.6"/><rect x="0" y="6" width="18" height="18" rx="1" fill="#1e1e1e"/><rect x="6" y="6" width="12" height="11" fill="#c8c8c8"/></svg>
<svg style="position:absolute;left:333px;top:864px;" width="24" height="24" viewBox="0 0 24 24"><defs><linearGradient id="cpa0" x1="0" y1="0" x2="0" y2="1"><stop offset="0" stop-color="#1f8ef0"/><stop offset="0.45" stop-color="#3bb5a0"/><stop offset="0.8" stop-color="#d8c020"/><stop offset="1" stop-color="#f0a020"/></linearGradient><linearGradient id="cpb0" x1="0.6" y1="0" x2="0.3" y2="1"><stop offset="0" stop-color="#a050f0"/><stop offset="0.5" stop-color="#f06090"/><stop offset="1" stop-color="#f89040"/></linearGradient></defs><path d="M5 1.5 H13 Q15.5 1.5 16.5 4 L17.5 7.5 H12 Q10.3 7.5 9.8 9.5 L8 15.5 Q7.4 17.5 5.3 17.5 H2.8 Q0.5 17.5 1 15 L3.5 3.8 Q4 1.5 5 1.5 Z" fill="url(#cpa0)"/><path d="M13.5 1.5 Q15.5 1.6 16.5 4 L17.5 7.5 H14 Z" fill="#1a50d8"/><path d="M19 22.6 H11.5 Q9 22.6 8 20.2 L7 16.5 H12 Q13.7 16.5 14.2 14.5 L16 8.5 Q16.6 6.5 18.7 6.5 H21.2 Q23.5 6.5 23 9 L20.5 20.3 Q20 22.6 19 22.6 Z" fill="url(#cpb0)"/><path d="M7 16.5 L8 20.2 Q8.6 22 10.2 22.5 Q8.8 19 10 16.5 Z" fill="#e84830"/></svg>
<svg style="position:absolute;left:377px;top:864px;" width="24" height="24" viewBox="0 0 24 24"><defs><linearGradient id="st0" x1="0" y1="0" x2="0.3" y2="1"><stop offset="0" stop-color="#1a62b8"/><stop offset="1" stop-color="#1b3d7e"/></linearGradient></defs><path d="M7.5 5.5 V2.5 Q7.5 1.5 8.5 1.5 H15.5 Q16.5 1.5 16.5 2.5 V5.5" stroke="#25bdf5" stroke-width="1.8" fill="none"/><path d="M1 5.5 Q1 4.5 2 4.5 H22 Q23 4.5 23 5.5 V19 Q23 23 19 23 H5 Q1 23 1 19 Z" fill="url(#st0)"/><rect x="7.3" y="9.3" width="4.3" height="4.3" fill="#f25022"/><rect x="12.4" y="9.3" width="4.3" height="4.3" fill="#7fba00"/><rect x="7.3" y="14.4" width="4.3" height="4.3" fill="#00a4ef"/><rect x="12.4" y="14.4" width="4.3" height="4.3" fill="#ffb900"/></svg>
<svg style="position:absolute;left:421px;top:865px;" width="24" height="22" viewBox="0 0 24 22"><path d="M0 2 Q0 0 2 0 H8 L10 2 H22 Q24 2 24 4 V20 Q24 22 22 22 H2 Q0 22 0 20 Z" fill="#e8a800"/><rect x="0" y="4" width="24" height="18" rx="1" fill="#ffd54a"/><rect x="5" y="14" width="14" height="8" rx="1.5" fill="#1f7ad8"/></svg>
<svg style="position:absolute;left:465px;top:864px;" width="24" height="24" viewBox="0 0 24 24"><defs><linearGradient id="ed0" x1="0" y1="0.2" x2="1" y2="0.6"><stop offset="0" stop-color="#2fb4ee"/><stop offset="0.55" stop-color="#2cc6c8"/><stop offset="1" stop-color="#5fe36a"/></linearGradient></defs><circle cx="12" cy="12" r="11.8" fill="#1b88df"/><path d="M0.3 10.5 A11.8 11.8 0 0 1 23.8 12.5 Q23.8 16 20 16 Q16.5 16 15.5 15 Q17.5 12 15 9.8 Q12 7.6 8.5 8.6 Q3 10 0.3 10.5 Z" fill="url(#ed0)"/><path d="M8.5 9.5 Q5.5 12 6.5 16.5 Q8.5 22 14.5 22.5 Q19.5 22.5 22.5 19.3 Q18 21 14.5 19.2 Q10.5 17 10.5 12.8 Q10.5 10.5 12 9.5 Z" fill="#0d56a6"/><ellipse cx="12.8" cy="12.6" rx="2.3" ry="2.5" fill="#d2e8ea"/><path d="M11.5 14.6 Q15 17.6 21.8 18.6 Q17.6 19.4 13.6 17.2 Q11.6 16 11.5 14.6 Z" fill="#d2e8ea"/><path d="M24 16.3 L24 24 L16 24 Q20.5 22 22.6 19.2 Q23.6 17.6 24 16.3 Z" fill="#d2e8ea"/></svg>
<div style="left:502px;top:857px;width:38px;height:38px;border-radius:5px;background:#e6f3f4;border:1px solid #d0e0e2"></div>
<svg style="position:absolute;left:508.79999999999995px;top:864px;" width="24" height="24" viewBox="0 0 24 24"><circle cx="12" cy="12" r="11.5" fill="#34a853"/><path d="M12 12 L2.04 6.25 A11.5 11.5 0 0 1 21.96 6.25 Z" fill="#ea4335"/><path d="M12 12 L21.96 6.25 A11.5 11.5 0 0 1 12 23.5 Z" fill="#fbbc04"/><circle cx="12" cy="12" r="5.3" fill="#fff"/><circle cx="12" cy="12" r="4.3" fill="#1a73e8"/></svg>
<div style="left:524px;top:859px;width:15px;height:15px;border-radius:8px;background:#f8f6f0;border:1px solid #bbb"></div>
<svg style="position:absolute;left:526px;top:862px;" width="11" height="10" viewBox="0 0 11 10"><ellipse cx="6" cy="6" rx="3.5" ry="2.5" fill="#3a2a12"/><ellipse cx="5" cy="6" rx="1.3" ry="2" fill="#e0a020"/></svg>
<div style="left:513px;top:892px;width:16px;height:3px;background:#2a7f98;border-radius:2px"></div>
<svg style="position:absolute;left:552.7px;top:864px;" width="24" height="24" viewBox="0 0 24 24"><circle cx="12" cy="12" r="11.5" fill="#34a853"/><path d="M12 12 L2.04 6.25 A11.5 11.5 0 0 1 21.96 6.25 Z" fill="#ea4335"/><path d="M12 12 L21.96 6.25 A11.5 11.5 0 0 1 12 23.5 Z" fill="#fbbc04"/><circle cx="12" cy="12" r="5.3" fill="#fff"/><circle cx="12" cy="12" r="4.3" fill="#1a73e8"/></svg>
<div style="left:565px;top:858px;width:17px;height:17px;border-radius:9px;background:#6a55a8"></div>
<svg style="position:absolute;left:567px;top:859px;" width="13" height="15" viewBox="0 0 13 15"><ellipse cx="6.5" cy="8" rx="5" ry="7" fill="#1a1a1a"/><rect x="2" y="5" width="9" height="3.5" rx="1.7" fill="#e8e0f0"/></svg>
<div style="left:562px;top:892px;width:6px;height:3px;background:#7a8a8e;border-radius:2px"></div>
<div style="left:589px;top:856px;width:40px;height:40px;border-radius:5px;background:#e9b3b0"></div>
<svg style="position:absolute;left:597px;top:865px;" width="22" height="22" viewBox="0 0 22 22"><circle cx="11" cy="11" r="11" fill="#2aa3e0"/><path d="M4.5 10.8 L16 6.5 L14 16 L10.5 13 L9 15 L9 12 Z" fill="#fff"/></svg>
<div style="left:611px;top:864px;width:15px;height:11px;border-radius:2px;background:#e53935;color:#fff;font-size:9px;line-height:11px;font-family:'Liberation Sans',sans-serif;text-align:center">.03</div>
<div style="left:604px;top:892px;width:8px;height:3px;background:#d03030;border-radius:2px"></div>
<svg style="position:absolute;left:641px;top:866px;" width="24" height="21" viewBox="0 0 24 21"><rect x="0" y="8" width="24" height="13" fill="#2a2a2a"/><path d="M2 11 H10 M2 14 H8 M2 17 H12" stroke="#777" stroke-width="0.6"/><path d="M10 8 Q12 2 16 3 L20 0 L22 4 Q24 8 20 11 L14 11 Z" fill="#aaa"/><circle cx="16" cy="5" r="1" fill="#333"/><circle cx="20" cy="5" r="1" fill="#333"/></svg>
<div style="left:650px;top:892px;width:6px;height:3px;background:#7a8a8e;border-radius:2px"></div>
<svg style="position:absolute;left:1170px;top:866px;" width="18" height="22" viewBox="0 0 18 22"><path d="M1 4 H8 M2 4 V8 M4 4 V10 M6 4 V7" stroke="#5aa0e8" stroke-width="1.6"/><rect x="10" y="4" width="3.5" height="14" rx="1.7" fill="#1a73e8"/><circle cx="11.8" cy="18" r="3" fill="#1a73e8"/><circle cx="11.8" cy="18" r="1.3" fill="#9cc8f8"/></svg>
<div style="left:1180px;top:858px;width:16px;height:16px;border-radius:8px;background:#c42b1c;color:#fff;font-size:11px;line-height:16px;text-align:center;font-family:'Liberation Sans',sans-serif">4</div>
<div class="t" style="left:1201px;top:861.87px;font-size:12.2px;line-height:12.2px;color:#1b1b1b;font-weight:400;font-family:"Liberation Sans", sans-serif;">Temps froid</div>
<div class="t" style="left:1200.5px;top:877.10px;font-size:12.4px;line-height:12.4px;color:#5c5c5c;font-weight:400;font-family:"Liberation Sans", sans-serif;">Maintenant</div>
<svg style="position:absolute;left:1332px;top:872px;" width="12" height="8" viewBox="0 0 12 8"><path d="M1 7 L6 2 L11 7" stroke="#1b1b1b" stroke-width="1.3" fill="none"/></svg>
<svg style="position:absolute;left:1362px;top:868px;" width="17" height="17" viewBox="0 0 17 17"><path d="M7 0.5 L13 2.5 V8 Q13 13 7 15.5 Q1 13 1 8 V2.5 Z" fill="#1a8ae0"/><path d="M7 0.5 L13 2.5 V8 Q13 13 7 15.5 Z" fill="#36b0f8"/><path d="M11.5 8 L16.5 16.5 H6.5 Z" fill="#f8c800"/><path d="M11.5 11 V14" stroke="#222" stroke-width="1"/></svg>
<div class="t" style="left:1397.5px;top:871.87px;font-size:10.2px;line-height:10.2px;color:#1b1b1b;font-weight:400;font-family:"Liberation Sans", sans-serif;">FRA</div>
<svg style="position:absolute;left:1437px;top:869px;" width="18" height="13" viewBox="0 0 18 13"><path d="M1 5 Q9 -2 17 5" stroke="#1b1b1b" stroke-width="1.3" fill="none"/><path d="M3.8 7.7 Q9 3 14.2 7.7" stroke="#1b1b1b" stroke-width="1.3" fill="none"/><path d="M6.5 10.3 Q9 8.2 11.5 10.3" stroke="#1b1b1b" stroke-width="1.3" fill="none"/><circle cx="9" cy="11.8" r="1.1" fill="#1b1b1b"/></svg>
<svg style="position:absolute;left:1461px;top:868px;" width="18" height="16" viewBox="0 0 18 16"><path d="M1.5 5.5 H4.5 L8.5 2 V14 L4.5 10.5 H1.5 Z" stroke="#1b1b1b" stroke-width="1.1" fill="none" stroke-linejoin="round"/><path d="M11 5.5 Q12.5 8 11 10.5 M13 3.5 Q16 8 13 12.5 M15 1.5 Q19 8 15 14.5" stroke="#1b1b1b" stroke-width="1" fill="none"/></svg>
<svg style="position:absolute;left:1486px;top:867px;" width="17" height="15" viewBox="0 0 17 15"><rect x="1" y="3.5" width="13" height="9" rx="1.5" stroke="#1b1b1b" stroke-width="1" fill="none"/><rect x="3.5" y="6" width="8" height="4.5" fill="#1b1b1b"/><rect x="14.3" y="6.5" width="1.8" height="3" fill="#1b1b1b"/><path d="M4.5 0 L2.5 4.5 H5 L3.5 8" stroke="#1b1b1b" stroke-width="1" fill="none"/></svg>
<div class="t" style="left:1462px;width:120px;text-align:right;top:862.42px;font-size:11.2px;line-height:11.2px;color:#1b1b1b">18:22</div>
<div class="t" style="left:1462px;width:120px;text-align:right;top:877.64px;font-size:12px;line-height:12px;color:#1b1b1b">2025-03-10</div>
<div style="left:1600px;top:852px;width:1600px;height:48px;background:linear-gradient(90deg,#d3e6ed,#d6e6ee 50%,#d4e5ee);border-top:1px solid #b4c8cc"></div>
<svg style="position:absolute;left:1621px;top:865px;" width="23" height="23" viewBox="0 0 23 23"><defs><linearGradient id="wg1600" x1="0" y1="0" x2="1" y2="1"><stop offset="0" stop-color="#4cc2ff"/><stop offset="1" stop-color="#0063d1"/></linearGradient></defs><rect x="0" y="0" width="10.8" height="10.8" rx="1" fill="url(#wg1600)"/><rect x="12.2" y="0" width="10.8" height="10.8" rx="1" fill="url(#wg1600)"/><rect x="0" y="12.2" width="10.8" height="10.8" rx="1" fill="url(#wg1600)"/><rect x="12.2" y="12.2" width="10.8" height="10.8" rx="1" fill="url(#wg1600)"/></svg>
<div style="left:1658px;top:860px;width:218px;height:31px;border-radius:16px;background:#eef6f7;border:1px solid #c5d6da"></div>
<svg style="position:absolute;left:1667px;top:866px;" width="20" height="20" viewBox="0 0 20 20"><circle cx="8.5" cy="8.5" r="6" stroke="#1c1c1c" stroke-width="1.7" fill="none"/><path d="M13 13 L17.5 17.5" stroke="#1c1c1c" stroke-width="1.9"/></svg>
<div class="t" style="left:1694px;top:869.91px;font-size:13.1px;line-height:13.1px;color:#5a5a5a;font-weight:400;font-family:"Liberation Sans", sans-serif;">Rechercher</div>
<svg style="position:absolute;left:1826px;top:862px;" width="46" height="28" viewBox="0 0 46 28"><ellipse cx="23" cy="19" rx="10" ry="6" fill="#b0402a"/><path d="M12 22 Q8 15 14 12" stroke="#a05030" stroke-width="3" fill="none"/><path d="M18 6 V16 M22 4 V15 M26 5 V14" stroke="#d8a030" stroke-width="1.6"/><path d="M28 5 Q40 6 36 20" stroke="#c08060" stroke-width="1" fill="none"/><path d="M4 4 V9 M4 4 L8 3 V8" stroke="#7a5a9a" stroke-width="1"/><circle cx="4" cy="9" r="1.3" fill="#7a5a9a"/><path d="M40 14 V21" stroke="#7a5a9a" stroke-width="1"/><circle cx="39" cy="21" r="1.5" fill="#7a5a9a"/></svg>
<svg style="position:absolute;left:1889px;top:864px;" width="25" height="24" viewBox="0 0 25 24"><rect x="7" y="0" width="17" height="17" fill="#fafafa" stroke="#ddd" stroke-width="0.6"/><rect x="0" y="6" width="18" height="18" rx="1" fill="#1e1e1e"/><rect x="6" y="6" width="12" height="11" fill="#c8c8c8"/></svg>
<svg style="position:absolute;left:1933px;top:864px;" width="24" height="24" viewBox="0 0 24 24"><defs><linearGradient id="cpa1600" x1="0" y1="0" x2="0" y2="1"><stop offset="0" stop-color="#1f8ef0"/><stop offset="0.45" stop-color="#3bb5a0"/><stop offset="0.8" stop-color="#d8c020"/><stop offset="1" stop-color="#f0a020"/></linearGradient><linearGradient id="cpb1600" x1="0.6" y1="0" x2="0.3" y2="1"><stop offset="0" stop-color="#a050f0"/><stop offset="0.5" stop-color="#f06090"/><stop offset="1" stop-color="#f89040"/></linearGradient></defs><path d="M5 1.5 H13 Q15.5 1.5 16.5 4 L17.5 7.5 H12 Q10.3 7.5 9.8 9.5 L8 15.5 Q7.4 17.5 5.3 17.5 H2.8 Q0.5 17.5 1 15 L3.5 3.8 Q4 1.5 5 1.5 Z" fill="url(#cpa1600)"/><path d="M13.5 1.5 Q15.5 1.6 16.5 4 L17.5 7.5 H14 Z" fill="#1a50d8"/><path d="M19 22.6 H11.5 Q9 22.6 8 20.2 L7 16.5 H12 Q13.7 16.5 14.2 14.5 L16 8.5 Q16.6 6.5 18.7 6.5 H21.2 Q23.5 6.5 23 9 L20.5 20.3 Q20 22.6 19 22.6 Z" fill="url(#cpb1600)"/><path d="M7 16.5 L8 20.2 Q8.6 22 10.2 22.5 Q8.8 19 10 16.5 Z" fill="#e84830"/></svg>
<svg style="position:absolute;left:1977px;top:864px;" width="24" height="24" viewBox="0 0 24 24"><defs><linearGradient id="st1600" x1="0" y1="0" x2="0.3" y2="1"><stop offset="0" stop-color="#1a62b8"/><stop offset="1" stop-color="#1b3d7e"/></linearGradient></defs><path d="M7.5 5.5 V2.5 Q7.5 1.5 8.5 1.5 H15.5 Q16.5 1.5 16.5 2.5 V5.5" stroke="#25bdf5" stroke-width="1.8" fill="none"/><path d="M1 5.5 Q1 4.5 2 4.5 H22 Q23 4.5 23 5.5 V19 Q23 23 19 23 H5 Q1 23 1 19 Z" fill="url(#st1600)"/><rect x="7.3" y="9.3" width="4.3" height="4.3" fill="#f25022"/><rect x="12.4" y="9.3" width="4.3" height="4.3" fill="#7fba00"/><rect x="7.3" y="14.4" width="4.3" height="4.3" fill="#00a4ef"/><rect x="12.4" y="14.4" width="4.3" height="4.3" fill="#ffb900"/></svg>
<svg style="position:absolute;left:2021px;top:865px;" width="24" height="22" viewBox="0 0 24 22"><path d="M0 2 Q0 0 2 0 H8 L10 2 H22 Q24 2 24 4 V20 Q24 22 22 22 H2 Q0 22 0 20 Z" fill="#e8a800"/><rect x="0" y="4" width="24" height="18" rx="1" fill="#ffd54a"/><rect x="5" y="14" width="14" height="8" rx="1.5" fill="#1f7ad8"/></svg>
<svg style="position:absolute;left:2065px;top:864px;" width="24" height="24" viewBox="0 0 24 24"><defs><linearGradient id="ed1600" x1="0" y1="0.2" x2="1" y2="0.6"><stop offset="0" stop-color="#2fb4ee"/><stop offset="0.55" stop-color="#2cc6c8"/><stop offset="1" stop-color="#5fe36a"/></linearGradient></defs><circle cx="12" cy="12" r="11.8" fill="#1b88df"/><path d="M0.3 10.5 A11.8 11.8 0 0 1 23.8 12.5 Q23.8 16 20 16 Q16.5 16 15.5 15 Q17.5 12 15 9.8 Q12 7.6 8.5 8.6 Q3 10 0.3 10.5 Z" fill="url(#ed1600)"/><path d="M8.5 9.5 Q5.5 12 6.5 16.5 Q8.5 22 14.5 22.5 Q19.5 22.5 22.5 19.3 Q18 21 14.5 19.2 Q10.5 17 10.5 12.8 Q10.5 10.5 12 9.5 Z" fill="#0d56a6"/><ellipse cx="12.8" cy="12.6" rx="2.3" ry="2.5" fill="#d2e8ea"/><path d="M11.5 14.6 Q15 17.6 21.8 18.6 Q17.6 19.4 13.6 17.2 Q11.6 16 11.5 14.6 Z" fill="#d2e8ea"/><path d="M24 16.3 L24 24 L16 24 Q20.5 22 22.6 19.2 Q23.6 17.6 24 16.3 Z" fill="#d2e8ea"/></svg>
<div style="left:2102px;top:857px;width:38px;height:38px;border-radius:5px;background:#e6f3f4;border:1px solid #d0e0e2"></div>
<svg style="position:absolute;left:2108.8px;top:864px;" width="24" height="24" viewBox="0 0 24 24"><circle cx="12" cy="12" r="11.5" fill="#34a853"/><path d="M12 12 L2.04 6.25 A11.5 11.5 0 0 1 21.96 6.25 Z" fill="#ea4335"/><path d="M12 12 L21.96 6.25 A11.5 11.5 0 0 1 12 23.5 Z" fill="#fbbc04"/><circle cx="12" cy="12" r="5.3" fill="#fff"/><circle cx="12" cy="12" r="4.3" fill="#1a73e8"/></svg>
<div style="left:2124px;top:859px;width:15px;height:15px;border-radius:8px;background:#f8f6f0;border:1px solid #bbb"></div>
<svg style="position:absolute;left:2126px;top:862px;" width="11" height="10" viewBox="0 0 11 10"><ellipse cx="6" cy="6" rx="3.5" ry="2.5" fill="#3a2a12"/><ellipse cx="5" cy="6" rx="1.3" ry="2" fill="#e0a020"/></svg>
<div style="left:2113px;top:892px;width:16px;height:3px;background:#2a7f98;border-radius:2px"></div>
<svg style="position:absolute;left:2152.7px;top:864px;" width="24" height="24" viewBox="0 0 24 24"><circle cx="12" cy="12" r="11.5" fill="#34a853"/><path d="M12 12 L2.04 6.25 A11.5 11.5 0 0 1 21.96 6.25 Z" fill="#ea4335"/><path d="M12 12 L21.96 6.25 A11.5 11.5 0 0 1 12 23.5 Z" fill="#fbbc04"/><circle cx="12" cy="12" r="5.3" fill="#fff"/><circle cx="12" cy="12" r="4.3" fill="#1a73e8"/></svg>
<div style="left:2165px;top:858px;width:17px;height:17px;border-radius:9px;background:#6a55a8"></div>
<svg style="position:absolute;left:2167px;top:859px;" width="13" height="15" viewBox="0 0 13 15"><ellipse cx="6.5" cy="8" rx="5" ry="7" fill="#1a1a1a"/><rect x="2" y="5" width="9" height="3.5" rx="1.7" fill="#e8e0f0"/></svg>
<div style="left:2162px;top:892px;width:6px;height:3px;background:#7a8a8e;border-radius:2px"></div>
<div style="left:2189px;top:856px;width:40px;height:40px;border-radius:5px;background:#e9b3b0"></div>
<svg style="position:absolute;left:2197px;top:865px;" width="22" height="22" viewBox="0 0 22 22"><circle cx="11" cy="11" r="11" fill="#2aa3e0"/><path d="M4.5 10.8 L16 6.5 L14 16 L10.5 13 L9 15 L9 12 Z" fill="#fff"/></svg>
<div style="left:2211px;top:864px;width:15px;height:11px;border-radius:2px;background:#e53935;color:#fff;font-size:9px;line-height:11px;font-family:'Liberation Sans',sans-serif;text-align:center">.03</div>
<div style="left:2204px;top:892px;width:8px;height:3px;background:#d03030;border-radius:2px"></div>
<svg style="position:absolute;left:2241px;top:866px;" width="24" height="21" viewBox="0 0 24 21"><rect x="0" y="8" width="24" height="13" fill="#2a2a2a"/><path d="M2 11 H10 M2 14 H8 M2 17 H12" stroke="#777" stroke-width="0.6"/><path d="M10 8 Q12 2 16 3 L20 0 L22 4 Q24 8 20 11 L14 11 Z" fill="#aaa"/><circle cx="16" cy="5" r="1" fill="#333"/><circle cx="20" cy="5" r="1" fill="#333"/></svg>
<div style="left:2250px;top:892px;width:6px;height:3px;background:#7a8a8e;border-radius:2px"></div>
<svg style="position:absolute;left:2954px;top:866px;" width="18" height="22" viewBox="0 0 18 22"><path d="M1 4 H8 M2 4 V8 M4 4 V10 M6 4 V7" stroke="#5aa0e8" stroke-width="1.6"/><rect x="10" y="4" width="3.5" height="14" rx="1.7" fill="#1a73e8"/><circle cx="11.8" cy="18" r="3" fill="#1a73e8"/><circle cx="11.8" cy="18" r="1.3" fill="#9cc8f8"/></svg>
<div style="left:2964px;top:858px;width:16px;height:16px;border-radius:8px;background:#c42b1c;color:#fff;font-size:11px;line-height:16px;text-align:center;font-family:'Liberation Sans',sans-serif">4</div>
<div class="t" style="left:2985px;top:861.87px;font-size:12.2px;line-height:12.2px;color:#1b1b1b;font-weight:400;font-family:"Liberation Sans", sans-serif;">Temps froid</div>
<div class="t" style="left:2984.5px;top:877.10px;font-size:12.4px;line-height:12.4px;color:#5c5c5c;font-weight:400;font-family:"Liberation Sans", sans-serif;">Maintenant</div>
<div class="t" style="left:3058px;width:120px;text-align:right;top:862.42px;font-size:11.2px;line-height:11.2px;color:#4a4a4a">18:22</div>
<div class="t" style="left:3058px;width:120px;text-align:right;top:877.64px;font-size:12px;line-height:12px;color:#4a4a4a">2025-03-10</div>
</body></html>
